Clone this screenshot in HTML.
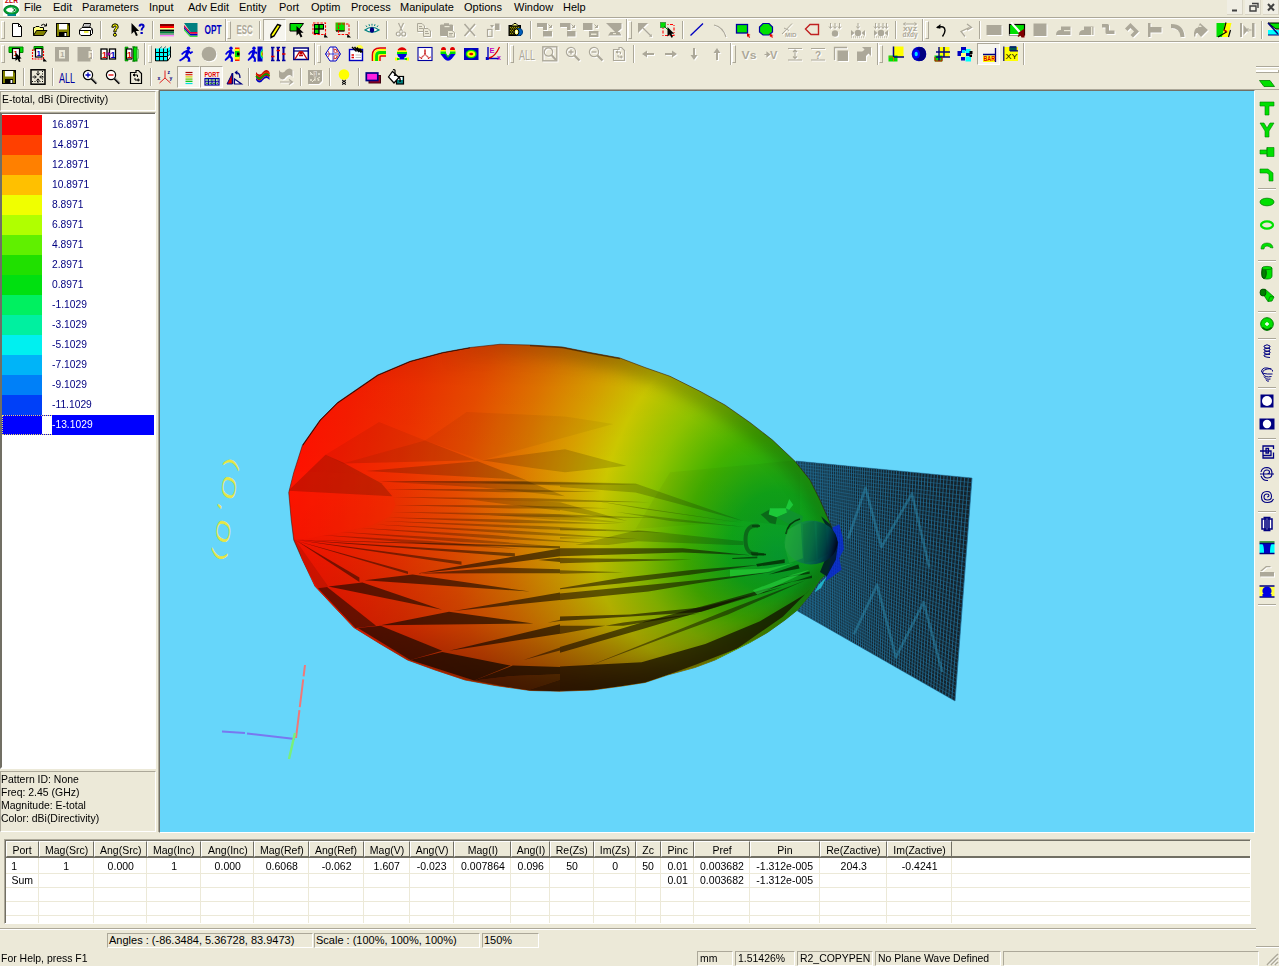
<!DOCTYPE html>
<html><head><meta charset="utf-8"><title>E-total, dBi (Directivity)</title>
<style>
html,body{margin:0;padding:0}
body{width:1279px;height:966px;background:#ECE9D8;position:relative;overflow:hidden;font:11px "Liberation Sans",sans-serif;color:#000;-webkit-font-smoothing:none}
div,svg,span{position:absolute;box-sizing:border-box}
.m{top:0px;height:14px;line-height:14px;white-space:nowrap;font-size:11px}
.i{width:16px;height:16px;overflow:visible}
.hs{height:1px;left:0;width:1279px}
.vs{width:1px;height:18px;background:#ACA899;border-right:1px solid #fff;box-sizing:content-box}
.grip{width:4px;height:18px;border-left:1px solid #fff;border-top:1px solid #fff;border-right:1px solid #ACA899;border-bottom:1px solid #ACA899}
.pr{width:23px;height:22px;border:1px solid #fff;border-top-color:#ACA899;border-left-color:#ACA899;background:#F6F5EE}
.sunk{border:1px solid #fff;border-top-color:#ACA899;border-left-color:#ACA899}
.lg{left:2px;width:40px;height:20px}
.lt{left:52px;width:100px;height:20px;line-height:19px;color:#000080;white-space:nowrap;transform:scaleX(0.935);transform-origin:0 0}
.t{white-space:nowrap;transform:scaleX(0.95);transform-origin:0 0}
.th{top:841px;height:16px;line-height:16px;text-align:center;white-space:nowrap;border-right:1px solid #716F64;border-left:1px solid #fff;border-top:1px solid #fff;border-bottom:1px solid #716F64}
.td{height:14px;line-height:14px;text-align:center;white-space:nowrap}
.c{position:static;display:inline-block;transform:scaleX(0.955)}
.sp{height:15px;top:951px;line-height:12px;white-space:nowrap;padding-left:2px;border:1px solid #fff;border-top-color:#ACA899;border-left-color:#ACA899}
</style></head><body>

<svg style="left:3px;top:0" width="17" height="16" viewBox="0 0 17 16"><rect x="0" y="0" width="16.5" height="16" fill="#fff"/><text x="2" y="3.2" font-size="7.5" font-weight="bold" fill="#C00000" font-family="Liberation Sans, sans-serif" textLength="13" lengthAdjust="spacingAndGlyphs">ZLR</text><path d="M7.5 4.5 L9 7 L5.5 7 Z" fill="#008020"/><ellipse cx="8.2" cy="10" rx="6.3" ry="3.6" fill="none" stroke="#00A030" stroke-width="2.4"/><ellipse cx="8.2" cy="10" rx="7.4" ry="4.6" fill="none" stroke="#006018" stroke-width="0.7"/><path d="M9.5 8.2 L12.5 10 L9.5 11.6" fill="none" stroke="#007020" stroke-width="1"/><rect x="4.5" y="14" width="8.5" height="2" fill="#008888"/></svg>
<span class="m" style="left:24px">File</span>
<span class="m" style="left:53px">Edit</span>
<span class="m" style="left:82px">Parameters</span>
<span class="m" style="left:149px">Input</span>
<span class="m" style="left:188px">Adv Edit</span>
<span class="m" style="left:239px">Entity</span>
<span class="m" style="left:279px">Port</span>
<span class="m" style="left:311px">Optim</span>
<span class="m" style="left:351px">Process</span>
<span class="m" style="left:400px">Manipulate</span>
<span class="m" style="left:464px">Options</span>
<span class="m" style="left:514px">Window</span>
<span class="m" style="left:563px">Help</span>
<div style="left:1227px;top:0;width:16px;height:15px;background:#F0EEE4;border-right:1px solid #D8D4C4;border-bottom:1px solid #D8D4C4"></div>
<div style="left:1245px;top:0;width:16px;height:15px;background:#F0EEE4;border-right:1px solid #D8D4C4;border-bottom:1px solid #D8D4C4"></div>
<div style="left:1263px;top:0;width:16px;height:15px;background:#F0EEE4;border-right:1px solid #D8D4C4;border-bottom:1px solid #D8D4C4"></div>
<svg style="left:1227px;top:0" width="52" height="16" viewBox="0 0 52 16"><path d="M5 10.5 H10" stroke="#404040" stroke-width="2"/><path d="M25 3.5 H31 V8 M23 6 H29 V11 H23 Z" fill="none" stroke="#404040" stroke-width="1.4"/><path d="M41 4 L47 10.5 M47 4 L41 10.5" stroke="#404040" stroke-width="2"/></svg>
<div class="hs" style="top:17px;background:#ACA899;left:0px;width:1279px"></div>
<div class="hs" style="top:18px;background:#FFFFFF;left:0px;width:1279px"></div>
<div class="hs" style="top:41px;background:#ACA899;left:0px;width:1279px"></div>
<div class="hs" style="top:42px;background:#FFFFFF;left:0px;width:1279px"></div>
<div class="hs" style="top:89px;background:#ACA899;left:0px;width:1279px"></div>
<div class="grip" style="left:1px;top:21px"></div>
<svg class="i" style="left:9px;top:22px" viewBox="0 0 16 16"><path d="M3.5 1.5 H9.5 L12.5 4.5 V14.5 H3.5 Z" fill="#fff" stroke="#000" stroke-width="1" /><path d="M9.5 1.5 V4.5 H12.5" fill="none" stroke="#000" stroke-width="1" /></svg>
<svg class="i" style="left:32px;top:22px" viewBox="0 0 16 16"><path d="M1.5 13.5 V5.5 H3 L4 4.5 H7 L8 5.5 H11.5 V8" fill="#FFFF80" stroke="#000" stroke-width="1" /><path d="M1.5 13.5 L4.5 8.5 H15 L11.5 13.5 Z" fill="#808000" stroke="#000" stroke-width="1" /><path d="M9 3.5 Q11.5 1 14 3.5 M14.5 1.5 V4 H12" fill="none" stroke="#000" stroke-width="1" /></svg>
<svg class="i" style="left:55px;top:22px" viewBox="0 0 16 16"><rect x="1.5" y="1.5" width="13" height="13" fill="#808000" stroke="#000"/><rect x="4" y="2" width="8" height="5.5" fill="#fff" /><rect x="4" y="10" width="8" height="4.5" fill="#000" /><rect x="9.5" y="11" width="1.8" height="3" fill="#fff" /><rect x="13" y="2.2" width="1" height="1.3" fill="#000" /></svg>
<svg class="i" style="left:78px;top:22px" viewBox="0 0 16 16"><path d="M4.5 6 L6 1.5 H12.5 L11.5 6" fill="#fff" stroke="#000" stroke-width="1" /><path d="M1.5 8 L4 5.5 H13 L14.5 7.5 V11.5 L12.5 13.5 H3 L1.5 12 Z" fill="#fff" stroke="#000" stroke-width="1" /><path d="M1.5 8.5 H12.5 L14.5 7" fill="none" stroke="#000" stroke-width="1" /><line x1="12.5" y1="8.5" x2="12.5" y2="13.5" stroke="#000" stroke-width="1" /><rect x="6" y="9.3" width="4.5" height="1.4" fill="#E8E800" /><line x1="6.5" y1="3" x2="11" y2="3" stroke="#808080" stroke-width="1" /><line x1="6" y1="4.5" x2="11" y2="4.5" stroke="#808080" stroke-width="1" /><path d="M3 13.5 H12" fill="none" stroke="#000" stroke-width="1" /></svg>
<div class="vs" style="left:100px;top:21px"></div>
<svg class="i" style="left:107px;top:22px" viewBox="0 0 16 16"><path d="M4.8 5.2 Q4.8 1.8 8 1.8 Q11.2 1.8 11.2 4.8 Q11.2 6.5 9.6 7.6 Q9 8.2 9 10 H6.8 Q6.8 7.6 8.2 6.4 Q9 5.6 9 4.9 Q9 3.8 8 3.8 Q7 3.8 7 5.2 Z" fill="#FFFF00" stroke="#000" stroke-width="1" /><circle cx="7.9" cy="12.8" r="1.5" fill="#FFFF00" stroke="#000" stroke-width="1"/></svg>
<svg class="i" style="left:130px;top:22px" viewBox="0 0 16 16"><path d="M1.5 1 V12 L4 9.6 L6 14 L7.8 13.2 L5.8 9 H9.2 Z" fill="#000" stroke="none" stroke-width="1" /><path d="M8.6 4.6 Q8.6 1.6 11.6 1.6 Q14.6 1.6 14.6 4.2 Q14.6 5.6 13.2 6.6 Q12.6 7.1 12.6 8.6 H10.6 Q10.6 6.6 11.8 5.6 Q12.5 5 12.5 4.3 Q12.5 3.5 11.6 3.5 Q10.7 3.5 10.7 4.6 Z" fill="#0000C0" stroke="none" stroke-width="1" /><rect x="10.5" y="10" width="2.3" height="2" fill="#0000C0" /></svg>
<div class="vs" style="left:152px;top:21px"></div>
<svg class="i" style="left:159px;top:22px" viewBox="0 0 16 16"><rect x="1" y="2" width="14" height="2" fill="#800000" /><rect x="1" y="4" width="14" height="2" fill="#FF0000" /><rect x="1" y="6" width="14" height="1.6" fill="#FFFF80" /><rect x="1" y="7.6" width="14" height="2" fill="#000" /><rect x="1" y="9.6" width="14" height="2" fill="#008040" /><rect x="1" y="11.6" width="14" height="1.4" fill="#80A090" /><rect x="1" y="13" width="14" height="1.4" fill="#FF80FF" /></svg>
<svg class="i" style="left:182px;top:22px" viewBox="0 0 16 16"><path d="M2 6.5 L8.5 13.5 H15.5 V15 H8 L2 8.5 Z" fill="#40E040" stroke="none" stroke-width="1" /><path d="M2 4.8 L8.5 11.8 H15.5 V13.5 H8.5 L2 6.5 Z" fill="#0000C0" stroke="none" stroke-width="1" /><path d="M2 3 L8.5 10 H15.5 V11.8 H8.5 L2 4.8 Z" fill="#E00040" stroke="none" stroke-width="1" /><path d="M2 1 H15.5 V10 H8.5 Z" fill="#008080" stroke="none" stroke-width="1" /></svg>
<svg class="i" style="left:205px;top:22px" viewBox="0 0 16 16"><text x="-0.5" y="12.5" fill="#0000C0" font-size="10.5" font-weight="bold" font-family="Liberation Sans, sans-serif" textLength="17" lengthAdjust="spacingAndGlyphs" transform="translate(0,-2) scale(1,1.15)">OPT</text></svg>
<div style="left:225px;top:19px;width:2px;height:22px;background:#fff;border-left:1px solid #ACA899"></div>
<div class="grip" style="left:227px;top:21px"></div>
<svg class="i" style="left:237px;top:22px" viewBox="0 0 16 16"><text x="0.5" y="13.5" fill="#fff" font-size="10.5" font-weight="bold" font-family="Liberation Sans, sans-serif" textLength="16" lengthAdjust="spacingAndGlyphs" transform="translate(0,-2) scale(1,1.15)">ESC</text><text x="-0.5" y="12.5" fill="#ACA899" font-size="10.5" font-weight="bold" font-family="Liberation Sans, sans-serif" textLength="16" lengthAdjust="spacingAndGlyphs" transform="translate(0,-2) scale(1,1.15)">ESC</text></svg>
<div class="vs" style="left:259px;top:21px"></div>
<div class="pr" style="left:263px;top:19px"></div>
<svg class="i" style="left:267px;top:23px" viewBox="0 0 16 16"><path d="M10.5 1.5 L13.5 2.5 L7 13 L4 14.5 L4 11.5 Z" fill="#FFFF00" stroke="#000" stroke-width="1.4" /><path d="M4 14.5 L4 12.4 L5.8 13.6 Z" fill="#000" stroke="none" stroke-width="1" /></svg>
<svg class="i" style="left:289px;top:22px" viewBox="0 0 16 16"><path d="M1 1.5 H14.5 L9 9 H1 Z" fill="#00E000" stroke="#000" stroke-width="1" /><path d="M7.5 4 V13.5 L9.8 11.4 L11.6 15.4 L13.4 14.6 L11.6 10.8 H14.6 Z" fill="#000" stroke="none" stroke-width="1" /></svg>
<svg class="i" style="left:312px;top:22px" viewBox="0 0 16 16"><rect x="2.5" y="2.5" width="9" height="9" fill="#00E000" stroke="#000"/><rect x="7" y="7" width="5" height="5" fill="#ECE9D8" /><line x1="7" y1="2" x2="7" y2="12" stroke="#000" stroke-width="1.4" /><line x1="2" y1="7" x2="12" y2="7" stroke="#000" stroke-width="1.4" /><rect x="1" y="1" width="12.5" height="11.5" fill="none" stroke="#FF0000" stroke-dasharray="2.5 1.2" stroke-width="1.1"/><path d="M12 15.5 H16 L12.5 12 Z" fill="#000" stroke="none" stroke-width="1" /></svg>
<svg class="i" style="left:335px;top:22px" viewBox="0 0 16 16"><rect x="1" y="1" width="8.5" height="7.5" fill="#00E000" stroke="#60A000"/><path d="M1 9 H9.5" fill="none" stroke="#000" stroke-width="1.3" /><rect x="3.5" y="2" width="10.5" height="10.5" fill="none" stroke="#FF0000" stroke-dasharray="2.5 1.2" stroke-width="1.1"/><path d="M12 15.5 H16 L12.5 12 Z" fill="#000" stroke="none" stroke-width="1" /></svg>
<div class="vs" style="left:357px;top:21px"></div>
<svg class="i" style="left:364px;top:22px" viewBox="0 0 16 16"><path d="M1 8 Q8 2.5 15 8 Q8 12.5 1 8 Z" fill="#fff" stroke="#008080" stroke-width="1.2" /><ellipse cx="8" cy="8" rx="2.2" ry="2.8" fill="#000080" stroke="none" stroke-width="1"/><path d="M3 5 L2 3.5 M5.5 4 L5 2.2 M8 3.6 V1.8 M10.5 4 L11 2.2 M13 5 L14 3.5" fill="none" stroke="#008080" stroke-width="1" /></svg>
<div class="vs" style="left:386px;top:21px"></div>
<svg class="i" style="left:393px;top:22px" viewBox="0 0 16 16"><g transform="translate(1,1)"><path d="M5.5 1 L9.5 9.5 M10.5 1 L6.5 9.5" fill="none" stroke="#FFFFFF" stroke-width="1.2" /><circle cx="5.3" cy="12" r="2" fill="none" stroke="#FFFFFF" stroke-width="1.2"/><circle cx="10.7" cy="12" r="2" fill="none" stroke="#FFFFFF" stroke-width="1.2"/></g><path d="M5.5 1 L9.5 9.5 M10.5 1 L6.5 9.5" fill="none" stroke="#ACA899" stroke-width="1.2" /><circle cx="5.3" cy="12" r="2" fill="none" stroke="#ACA899" stroke-width="1.2"/><circle cx="10.7" cy="12" r="2" fill="none" stroke="#ACA899" stroke-width="1.2"/></svg>
<svg class="i" style="left:416px;top:22px" viewBox="0 0 16 16"><g transform="translate(1,1)"><path d="M1.5 1.5 H6 L8.5 4 V9.5 H1.5 Z" fill="#ECE9D8" stroke="#FFFFFF" stroke-width="1" /><path d="M3 4.5 H6 M3 6.5 H7" fill="none" stroke="#FFFFFF" stroke-width="1" /><path d="M7.5 6.5 H12 L14.5 9 V14.5 H7.5 Z" fill="#ECE9D8" stroke="#FFFFFF" stroke-width="1" /><path d="M9 9.5 H12 M9 11.5 H13" fill="none" stroke="#FFFFFF" stroke-width="1" /></g><path d="M1.5 1.5 H6 L8.5 4 V9.5 H1.5 Z" fill="#ECE9D8" stroke="#ACA899" stroke-width="1" /><path d="M3 4.5 H6 M3 6.5 H7" fill="none" stroke="#ACA899" stroke-width="1" /><path d="M7.5 6.5 H12 L14.5 9 V14.5 H7.5 Z" fill="#ECE9D8" stroke="#ACA899" stroke-width="1" /><path d="M9 9.5 H12 M9 11.5 H13" fill="none" stroke="#ACA899" stroke-width="1" /></svg>
<svg class="i" style="left:439px;top:22px" viewBox="0 0 16 16"><g transform="translate(1,1)"><path d="M1.5 3 H13.5 V13.5 H1.5 Z" fill="#FFFFFF" stroke="#FFFFFF" stroke-width="1" /><rect x="5" y="1.2" width="5" height="3" fill="#FFFFFF" /><path d="M8.5 8.5 H13 L15.5 10.5 V15 H8.5 Z" fill="#ECE9D8" stroke="#FFFFFF" stroke-width="1" /><path d="M10 11.5 H14" fill="none" stroke="#ECE9D8" stroke-width="1" /></g><path d="M1.5 3 H13.5 V13.5 H1.5 Z" fill="#ACA899" stroke="#ACA899" stroke-width="1" /><rect x="5" y="1.2" width="5" height="3" fill="#ACA899" /><path d="M8.5 8.5 H13 L15.5 10.5 V15 H8.5 Z" fill="#ECE9D8" stroke="#ACA899" stroke-width="1" /><path d="M10 11.5 H14" fill="none" stroke="#ACA899" stroke-width="1" /><rect x="5.5" y="4" width="5" height="1.2" fill="#ECE9D8" /><path d="M10 11.5 H14 M10 13 H13" fill="none" stroke="#ACA899" stroke-width="1" /></svg>
<svg class="i" style="left:462px;top:22px" viewBox="0 0 16 16"><g transform="translate(1,1)"><path d="M2.5 2 L13 14 M13 2 L2.5 14" fill="none" stroke="#FFFFFF" stroke-width="1.6" /></g><path d="M2.5 2 L13 14 M13 2 L2.5 14" fill="none" stroke="#ACA899" stroke-width="1.6" /></svg>
<svg class="i" style="left:485px;top:22px" viewBox="0 0 16 16"><g transform="translate(1,1)"><rect x="2.5" y="7.5" width="4.5" height="7" fill="none" stroke="#FFFFFF" stroke-width="1.2"/><rect x="10" y="1.5" width="4.5" height="6.5" fill="#FFFFFF" /><path d="M5 3 H9 L7 6 Z" fill="#FFFFFF" stroke="none" stroke-width="1" /></g><rect x="2.5" y="7.5" width="4.5" height="7" fill="none" stroke="#ACA899" stroke-width="1.2"/><rect x="10" y="1.5" width="4.5" height="6.5" fill="#ACA899" /><path d="M5 3 H9 L7 6 Z" fill="#ACA899" stroke="none" stroke-width="1" /></svg>
<svg class="i" style="left:508px;top:22px" viewBox="0 0 16 16"><rect x="1" y="3.5" width="11.5" height="10" fill="#202000" stroke="#000"/><path d="M4 3.5 L6 1.5 H8 L10 3.5" fill="#FFFF80" stroke="#000" stroke-width="1" /><g fill="#C8C000"><rect x="2" y="5.0" width="1" height="0.8" fill="#C8C000" /><rect x="3" y="6.5" width="1" height="0.8" fill="#C8C000" /><rect x="2" y="8.0" width="1" height="0.8" fill="#C8C000" /><rect x="3" y="9.5" width="1" height="0.8" fill="#C8C000" /><rect x="2" y="11.0" width="1" height="0.8" fill="#C8C000" /><rect x="4" y="5.0" width="1" height="0.8" fill="#C8C000" /><rect x="5" y="6.5" width="1" height="0.8" fill="#C8C000" /><rect x="4" y="8.0" width="1" height="0.8" fill="#C8C000" /><rect x="5" y="9.5" width="1" height="0.8" fill="#C8C000" /><rect x="4" y="11.0" width="1" height="0.8" fill="#C8C000" /><rect x="6" y="5.0" width="1" height="0.8" fill="#C8C000" /><rect x="7" y="6.5" width="1" height="0.8" fill="#C8C000" /><rect x="6" y="8.0" width="1" height="0.8" fill="#C8C000" /><rect x="7" y="9.5" width="1" height="0.8" fill="#C8C000" /><rect x="6" y="11.0" width="1" height="0.8" fill="#C8C000" /><rect x="8" y="5.0" width="1" height="0.8" fill="#C8C000" /><rect x="9" y="6.5" width="1" height="0.8" fill="#C8C000" /><rect x="8" y="8.0" width="1" height="0.8" fill="#C8C000" /><rect x="9" y="9.5" width="1" height="0.8" fill="#C8C000" /><rect x="8" y="11.0" width="1" height="0.8" fill="#C8C000" /><rect x="10" y="5.0" width="1" height="0.8" fill="#C8C000" /><rect x="11" y="6.5" width="1" height="0.8" fill="#C8C000" /><rect x="10" y="8.0" width="1" height="0.8" fill="#C8C000" /><rect x="11" y="9.5" width="1" height="0.8" fill="#C8C000" /><rect x="10" y="11.0" width="1" height="0.8" fill="#C8C000" /></g><circle cx="11" cy="10" r="3.6" fill="#0060C0" stroke="#004080" stroke-width="1"/><ellipse cx="8.5" cy="10" rx="2.4" ry="3" fill="#FFFF60" stroke="#000" stroke-width="1"/><ellipse cx="8.5" cy="10" rx="1" ry="1.5" fill="#fff" stroke="none" stroke-width="1"/></svg>
<div class="vs" style="left:530px;top:21px"></div>
<svg class="i" style="left:537px;top:22px" viewBox="0 0 16 16"><g transform="translate(1,1)"><path d="M0 1 H10 V8 H6 V5 H0 Z" fill="#FFFFFF" stroke="none" stroke-width="1" /><path d="M6 9 H15 V14.5 H6 Z" fill="#FFFFFF" stroke="none" stroke-width="1" /><path d="M11.5 2.5 L14.5 5.5 M14.5 3 V5.5 H12" fill="none" stroke="#FFFFFF" stroke-width="1" /></g><path d="M0 1 H10 V8 H6 V5 H0 Z" fill="#ACA899" stroke="none" stroke-width="1" /><path d="M6 9 H15 V14.5 H6 Z" fill="#ACA899" stroke="none" stroke-width="1" /><path d="M11.5 2.5 L14.5 5.5 M14.5 3 V5.5 H12" fill="none" stroke="#ACA899" stroke-width="1" /></svg>
<svg class="i" style="left:560px;top:22px" viewBox="0 0 16 16"><g transform="translate(1,1)"><path d="M0 1 H10.5 V8 H7 V5 H0 Z" fill="#FFFFFF" stroke="none" stroke-width="1" /><path d="M7 9 H15.5 V14.5 H7 Z" fill="#FFFFFF" stroke="none" stroke-width="1" /><path d="M11.5 2.5 L14.5 5.5 M14.5 3 V5.5 H12" fill="none" stroke="#FFFFFF" stroke-width="1" /></g><path d="M0 1 H10.5 V8 H7 V5 H0 Z" fill="#ACA899" stroke="none" stroke-width="1" /><path d="M7 9 H15.5 V14.5 H7 Z" fill="#ACA899" stroke="none" stroke-width="1" /><path d="M11.5 2.5 L14.5 5.5 M14.5 3 V5.5 H12" fill="none" stroke="#ACA899" stroke-width="1" /></svg>
<svg class="i" style="left:583px;top:22px" viewBox="0 0 16 16"><g transform="translate(1,1)"><path d="M0 1 H9.5 V8 H0 Z" fill="#FFFFFF" stroke="none" stroke-width="1" /><path d="M6 9 H15.5 V15 H6 Z" fill="#FFFFFF" stroke="none" stroke-width="1" /><path d="M11.5 2.5 L14.5 5.5 M14.5 3 V5.5 H12" fill="none" stroke="#FFFFFF" stroke-width="1" /></g><path d="M0 1 H9.5 V8 H0 Z" fill="#ACA899" stroke="none" stroke-width="1" /><path d="M6 9 H15.5 V15 H6 Z" fill="#ACA899" stroke="none" stroke-width="1" /><path d="M11.5 2.5 L14.5 5.5 M14.5 3 V5.5 H12" fill="none" stroke="#ACA899" stroke-width="1" /><rect x="8" y="11.5" width="5.5" height="1.5" fill="#ECE9D8" /></svg>
<svg class="i" style="left:606px;top:22px" viewBox="0 0 16 16"><g transform="translate(1,1)"><path d="M0 1 H15.5 V6.5 L11.5 10 H13.5 L15.5 13.5 H2 L4.5 10 H9 Z" fill="#FFFFFF" stroke="none" stroke-width="1" /></g><path d="M0 1 H15.5 V6.5 L11.5 10 H13.5 L15.5 13.5 H2 L4.5 10 H9 Z" fill="#ACA899" stroke="none" stroke-width="1" /><rect x="7" y="11" width="3" height="1.2" fill="#ECE9D8" /></svg>
<div style="left:626px;top:19px;width:2px;height:22px;background:#fff;border-left:1px solid #ACA899"></div>
<div class="grip" style="left:628px;top:21px"></div>
<svg class="i" style="left:637px;top:22px" viewBox="0 0 16 16"><g transform="translate(1,1)"><path d="M1 1 H11 L1 11 Z" fill="#FFFFFF" stroke="none" stroke-width="1" /><path d="M6 6 L13.5 13.5" fill="none" stroke="#FFFFFF" stroke-width="1.4" /><path d="M12 14.5 L14.5 12 L15 15 Z" fill="#FFFFFF" stroke="none" stroke-width="1" /></g><path d="M1 1 H11 L1 11 Z" fill="#ACA899" stroke="none" stroke-width="1" /><path d="M6 6 L13.5 13.5" fill="none" stroke="#ACA899" stroke-width="1.4" /><path d="M12 14.5 L14.5 12 L15 15 Z" fill="#ACA899" stroke="none" stroke-width="1" /></svg>
<svg class="i" style="left:660px;top:22px" viewBox="0 0 16 16"><rect x="3" y="2.5" width="11" height="11" fill="none" stroke="#FF0000" stroke-dasharray="3 1.5 1 1.5" stroke-width="1.1"/><rect x="0.5" y="0.5" width="5" height="5" fill="#00E000" stroke="#40A040"/><path d="M7.5 5 V14.5 L9.8 12.4 L11.4 15.8 L13 15 L11.4 11.8 H14.2 Z" fill="#000" stroke="none" stroke-width="1" /><line x1="4" y1="4" x2="8" y2="8" stroke="#008000" stroke-width="1" /></svg>
<div class="vs" style="left:682px;top:21px"></div>
<svg class="i" style="left:689px;top:22px" viewBox="0 0 16 16"><line x1="1.5" y1="13.5" x2="14" y2="1.5" stroke="#0000C0" stroke-width="1.3" /></svg>
<svg class="i" style="left:712px;top:22px" viewBox="0 0 16 16"><path d="M2 3 Q11 5 14 15" fill="none" stroke="#fff" stroke-width="1.2" transform="translate(1,1)"/><path d="M2 3 Q11 5 14 15" fill="none" stroke="#ACA899" stroke-width="1.2" /></svg>
<svg class="i" style="left:735px;top:22px" viewBox="0 0 16 16"><rect x="1.5" y="2.5" width="11" height="8.5" fill="#00E000" stroke="#0000A0" stroke-width="1.3"/><path d="M12 11 L15.5 13 L14 13.4 L15.2 15.4 L14 15.8 L13 14 L12 15.2 Z" fill="#E00000" stroke="none" stroke-width="1" /></svg>
<svg class="i" style="left:758px;top:22px" viewBox="0 0 16 16"><path d="M5 1.5 H11 L14.5 5 V10 L11 13 H5 L1.5 10 V5 Z" fill="#00E000" stroke="#0000A0" stroke-width="1.2" /><path d="M11.5 11.5 L15.5 13.2 L14 13.6 L15 15.4 L13.8 15.8 L13 14.2 L12 15.2 Z" fill="#E00000" stroke="none" stroke-width="1" /></svg>
<svg class="i" style="left:781px;top:22px" viewBox="0 0 16 16"><g transform="translate(1,1)"><path d="M1 12 L11 1.5 M3 6 L8 8.5" fill="none" stroke="#FFFFFF" stroke-width="1" /><text x="4" y="15" fill="#FFFFFF" font-size="6" font-weight="bold" font-family="Liberation Sans, sans-serif" textLength="11.5" lengthAdjust="spacingAndGlyphs">MID</text></g><path d="M1 12 L11 1.5 M3 6 L8 8.5" fill="none" stroke="#ACA899" stroke-width="1" /><text x="4" y="15" fill="#ACA899" font-size="6" font-weight="bold" font-family="Liberation Sans, sans-serif" textLength="11.5" lengthAdjust="spacingAndGlyphs">MID</text></svg>
<svg class="i" style="left:804px;top:22px" viewBox="0 0 16 16"><path d="M6 2.5 H14.5 V12.5 H7 L1.5 7 Z" fill="none" stroke="#C02020" stroke-width="1.4" /></svg>
<svg class="i" style="left:827px;top:22px" viewBox="0 0 16 16"><g transform="translate(1,1)"><circle cx="8" cy="11.5" r="3.2" fill="#FFFFFF" stroke="none" stroke-width="1"/><path d="M3.5 1 V6 M8 1 V6 M12.5 1 V6 M2 4.5 L3.5 6.5 L5 4.5 M6.5 4.5 L8 6.5 L9.5 4.5 M11 4.5 L12.5 6.5 L14 4.5" fill="none" stroke="#FFFFFF" stroke-width="1" /></g><circle cx="8" cy="11.5" r="3.2" fill="#ACA899" stroke="none" stroke-width="1"/><path d="M3.5 1 V6 M8 1 V6 M12.5 1 V6 M2 4.5 L3.5 6.5 L5 4.5 M6.5 4.5 L8 6.5 L9.5 4.5 M11 4.5 L12.5 6.5 L14 4.5" fill="none" stroke="#ACA899" stroke-width="1" /></svg>
<svg class="i" style="left:850px;top:22px" viewBox="0 0 16 16"><g transform="translate(1,1)"><circle cx="8" cy="11" r="3.2" fill="#FFFFFF" stroke="none" stroke-width="1"/><path d="M1 8 L4.5 11 L1 14 Z M15 8 L11.5 11 L15 14 Z" fill="#FFFFFF" stroke="none" stroke-width="1" /><path d="M8 1 V6 M6.5 4.5 L8 6.5 L9.5 4.5" fill="none" stroke="#FFFFFF" stroke-width="1" /><path d="M1 15 H15" fill="none" stroke="#FFFFFF" stroke-width="1" stroke-dasharray="1 1"/></g><circle cx="8" cy="11" r="3.2" fill="#ACA899" stroke="none" stroke-width="1"/><path d="M1 8 L4.5 11 L1 14 Z M15 8 L11.5 11 L15 14 Z" fill="#ACA899" stroke="none" stroke-width="1" /><path d="M8 1 V6 M6.5 4.5 L8 6.5 L9.5 4.5" fill="none" stroke="#ACA899" stroke-width="1" /><path d="M1 15 H15" fill="none" stroke="#ACA899" stroke-width="1" stroke-dasharray="1 1"/></svg>
<svg class="i" style="left:873px;top:22px" viewBox="0 0 16 16"><g transform="translate(1,1)"><circle cx="8" cy="11" r="3.2" fill="#FFFFFF" stroke="none" stroke-width="1"/><path d="M1 8 L4.5 11 L1 14 Z M15 8 L11.5 11 L15 14 Z" fill="#FFFFFF" stroke="none" stroke-width="1" /><path d="M2.5 1 V6 M6 1 V6 M10 1 V6 M13.5 1 V6 M1 4.5 L2.5 6.5 L4 4.5 M4.5 4.5 L6 6.5 L7.5 4.5 M8.5 4.5 L10 6.5 L11.5 4.5 M12 4.5 L13.5 6.5 L15 4.5" fill="none" stroke="#FFFFFF" stroke-width="1" /><path d="M1 15 H15" fill="none" stroke="#FFFFFF" stroke-width="1" stroke-dasharray="1 1"/></g><circle cx="8" cy="11" r="3.2" fill="#ACA899" stroke="none" stroke-width="1"/><path d="M1 8 L4.5 11 L1 14 Z M15 8 L11.5 11 L15 14 Z" fill="#ACA899" stroke="none" stroke-width="1" /><path d="M2.5 1 V6 M6 1 V6 M10 1 V6 M13.5 1 V6 M1 4.5 L2.5 6.5 L4 4.5 M4.5 4.5 L6 6.5 L7.5 4.5 M8.5 4.5 L10 6.5 L11.5 4.5 M12 4.5 L13.5 6.5 L15 4.5" fill="none" stroke="#ACA899" stroke-width="1" /><path d="M1 15 H15" fill="none" stroke="#ACA899" stroke-width="1" stroke-dasharray="1 1"/></svg>
<div class="vs" style="left:895px;top:21px"></div>
<svg class="i" style="left:902px;top:22px" viewBox="0 0 16 16"><g transform="translate(1,1)"><text x="1" y="8.5" fill="#FFFFFF" font-size="7.5" font-weight="bold" font-family="Liberation Sans, sans-serif" textLength="14" lengthAdjust="spacingAndGlyphs">xyz</text><text x="0.5" y="15" fill="#FFFFFF" font-size="7.5" font-weight="bold" font-family="Liberation Sans, sans-serif" textLength="15" lengthAdjust="spacingAndGlyphs">dxdy</text><path d="M1.5 2 H14.5 M3.5 0.5 L1.5 2 L3.5 3.5 M12.5 0.5 L14.5 2 L12.5 3.5" fill="none" stroke="#FFFFFF" stroke-width="1" /></g><text x="1" y="8.5" fill="#ACA899" font-size="7.5" font-weight="bold" font-family="Liberation Sans, sans-serif" textLength="14" lengthAdjust="spacingAndGlyphs">xyz</text><text x="0.5" y="15" fill="#ACA899" font-size="7.5" font-weight="bold" font-family="Liberation Sans, sans-serif" textLength="15" lengthAdjust="spacingAndGlyphs">dxdy</text><path d="M1.5 2 H14.5 M3.5 0.5 L1.5 2 L3.5 3.5 M12.5 0.5 L14.5 2 L12.5 3.5" fill="none" stroke="#ACA899" stroke-width="1" /></svg>
<div style="left:922px;top:19px;width:2px;height:22px;background:#fff;border-left:1px solid #ACA899"></div>
<div class="grip" style="left:925px;top:21px"></div>
<svg class="i" style="left:934px;top:22px" viewBox="0 0 16 16"><path d="M3 5.5 Q11 3 11 8.5 Q11 11 8.5 14.5" fill="none" stroke="#000" stroke-width="1.4" /><path d="M2 5.8 L6.5 2 L6.3 6.8 Z" fill="#000" stroke="none" stroke-width="1" /></svg>
<svg class="i" style="left:957px;top:22px" viewBox="0 0 16 16"><g transform="translate(1,1)"><path d="M12.5 5.5 L4 9.5 L8 14.5" fill="none" stroke="#FFFFFF" stroke-width="1.3" /><path d="M10 2 L14.5 5.5 L10 8" fill="none" stroke="#FFFFFF" stroke-width="1.3" /></g><path d="M12.5 5.5 L4 9.5 L8 14.5" fill="none" stroke="#ACA899" stroke-width="1.3" /><path d="M10 2 L14.5 5.5 L10 8" fill="none" stroke="#ACA899" stroke-width="1.3" /></svg>
<div class="vs" style="left:979px;top:21px"></div>
<svg class="i" style="left:986px;top:22px" viewBox="0 0 16 16"><g transform="translate(1,1)"><path d="M0.5 3 H15.5 V13 H0.5 Z" fill="#FFFFFF" stroke="none" stroke-width="1" /></g><path d="M0.5 3 H15.5 V13 H0.5 Z" fill="#ACA899" stroke="none" stroke-width="1" /></svg>
<svg class="i" style="left:1009px;top:22px" viewBox="0 0 16 16"><rect x="0.5" y="2.5" width="15" height="10.5" fill="#00E000" stroke="#000" stroke-width="1.2"/><rect x="0.5" y="12" width="9" height="1.4" fill="#fff" /><path d="M2 0.5 L12 11.5" fill="none" stroke="#fff" stroke-width="2.2" /><path d="M9 11 L15.5 6.5 V15.5 H12.5 L11.5 13.5 L9.5 15 L8.5 14 L10.5 12.5 Z" fill="#800000" stroke="none" stroke-width="1" /></svg>
<svg class="i" style="left:1032px;top:22px" viewBox="0 0 16 16"><g transform="translate(1,1)"><path d="M1.5 1.5 H14.5 V14 H1.5 Z" fill="#FFFFFF" stroke="none" stroke-width="1" /></g><path d="M1.5 1.5 H14.5 V14 H1.5 Z" fill="#ACA899" stroke="none" stroke-width="1" /></svg>
<svg class="i" style="left:1055px;top:22px" viewBox="0 0 16 16"><g transform="translate(1,1)"><path d="M1 13 Q1 8 6 8 V4.5 H15.5 V13 Z" fill="#FFFFFF" stroke="none" stroke-width="1" /></g><path d="M1 13 Q1 8 6 8 V4.5 H15.5 V13 Z" fill="#ACA899" stroke="none" stroke-width="1" /><rect x="9" y="8" width="6.5" height="1.2" fill="#ECE9D8" /></svg>
<svg class="i" style="left:1078px;top:22px" viewBox="0 0 16 16"><g transform="translate(1,1)"><path d="M1 13 Q1 8 6 8 V4.5 H15.5 V13 Z" fill="#FFFFFF" stroke="none" stroke-width="1" /></g><path d="M1 13 Q1 8 6 8 V4.5 H15.5 V13 Z" fill="#ACA899" stroke="none" stroke-width="1" /><rect x="13" y="5" width="1.3" height="8" fill="#ECE9D8" /></svg>
<svg class="i" style="left:1101px;top:22px" viewBox="0 0 16 16"><g transform="translate(1,1)"><path d="M1 2 H6.5 Q8 2 8 3.5 V8.5 H13.5 V12 H6 Q4.5 12 4.5 10.5 V5.5 H1 Z" fill="#FFFFFF" stroke="none" stroke-width="1" /></g><path d="M1 2 H6.5 Q8 2 8 3.5 V8.5 H13.5 V12 H6 Q4.5 12 4.5 10.5 V5.5 H1 Z" fill="#ACA899" stroke="none" stroke-width="1" /></svg>
<svg class="i" style="left:1124px;top:22px" viewBox="0 0 16 16"><g transform="translate(1,1)"><path d="M1 6.5 L6.5 1 L15 9.5 L9 15.5 L6.5 13 L10 9.5 L6.5 6 L3.5 9 Z" fill="#FFFFFF" stroke="none" stroke-width="1" /></g><path d="M1 6.5 L6.5 1 L15 9.5 L9 15.5 L6.5 13 L10 9.5 L6.5 6 L3.5 9 Z" fill="#ACA899" stroke="none" stroke-width="1" /></svg>
<svg class="i" style="left:1147px;top:22px" viewBox="0 0 16 16"><g transform="translate(1,1)"><path d="M1 1 H3.5 V5 H14.5 V10.5 H3.5 V15 H1 Z" fill="#FFFFFF" stroke="none" stroke-width="1" /></g><path d="M1 1 H3.5 V5 H14.5 V10.5 H3.5 V15 H1 Z" fill="#ACA899" stroke="none" stroke-width="1" /></svg>
<svg class="i" style="left:1170px;top:22px" viewBox="0 0 16 16"><g transform="translate(1,1)"><path d="M1 2 Q14 2 14.5 15 H10.5 Q10 6 1 6 Z" fill="#FFFFFF" stroke="none" stroke-width="1" /></g><path d="M1 2 Q14 2 14.5 15 H10.5 Q10 6 1 6 Z" fill="#ACA899" stroke="none" stroke-width="1" /></svg>
<svg class="i" style="left:1193px;top:22px" viewBox="0 0 16 16"><g transform="translate(1,1)"><path d="M7 1 L15 8 L8 15 L4.5 11 Q2 11 2.5 14.5 H1 Q0.5 6 5 5.5 Z" fill="#FFFFFF" stroke="none" stroke-width="1" /></g><path d="M7 1 L15 8 L8 15 L4.5 11 Q2 11 2.5 14.5 H1 Q0.5 6 5 5.5 Z" fill="#ACA899" stroke="none" stroke-width="1" /><path d="M7 3 L9 5 L5 5 Z" fill="#ECE9D8" stroke="none" stroke-width="1" /></svg>
<svg class="i" style="left:1216px;top:22px" viewBox="0 0 16 16"><rect x="0.5" y="1" width="8.5" height="14" fill="#00E000" /><path d="M9 1 H15.5 L12 15 H6 Z" fill="#FFFF00" stroke="none" stroke-width="1" /><rect x="13" y="8" width="3" height="7" fill="#ECE9D8" /><path d="M10 0.5 L8 8 L10.5 10 L2 15" fill="none" stroke="#000" stroke-width="1.2" /><path d="M14.5 8 L12.5 15" fill="none" stroke="#000" stroke-width="1.2" /><path d="M8 8 L11 9.5" fill="none" stroke="#E00000" stroke-width="1.2" /></svg>
<svg class="i" style="left:1239px;top:22px" viewBox="0 0 16 16"><g transform="translate(1,1)"><path d="M1 1 H3 V15 H1 Z M13 1 H15.5 V15 H13 Z M4.5 3 L9 8 L4.5 13 Z" fill="#FFFFFF" stroke="none" stroke-width="1" /></g><path d="M1 1 H3 V15 H1 Z M13 1 H15.5 V15 H13 Z M4.5 3 L9 8 L4.5 13 Z" fill="#ACA899" stroke="none" stroke-width="1" /><path d="M7.5 8 H12.5 M9.5 6 L7.5 8 L9.5 10" fill="none" stroke="#ACA899" stroke-width="1" /></svg>
<div class="vs" style="left:1261px;top:21px"></div>
<svg class="i" style="left:1268px;top:22px" viewBox="0 0 16 16"><path d="M0 1 H16 V7 H8 Z" fill="#00E000" stroke="#000" stroke-width="1" /><rect x="0" y="8" width="16" height="5" fill="#00FFFF" /><path d="M0 1 L10 12" fill="none" stroke="#000080" stroke-width="1.5" /><path d="M0 13 H16" fill="none" stroke="#000080" stroke-width="1" /></svg>
<div class="grip" style="left:1px;top:45px"></div>
<svg class="i" style="left:8px;top:46px" viewBox="0 0 16 16"><path d="M1 1 H15 V6.5 H1 Z" fill="#00E000" stroke="#008000" stroke-width="1" /><rect x="4.5" y="2.5" width="7" height="10" fill="#fff" stroke="#000" stroke-width="1.2"/><text x="5.6" y="10" fill="#E00000" font-size="8" font-weight="bold" font-family="Liberation Sans, sans-serif" >1</text><path d="M7.5 6.5 V15 L9.6 13 L11 16 L12.6 15.4 L11.2 12.4 H13.6 Z" fill="#000" stroke="none" stroke-width="1" /></svg>
<svg class="i" style="left:31px;top:46px" viewBox="0 0 16 16"><path d="M3 0.5 H12 V4 H3 Z" fill="#00E000" stroke="#008000" stroke-width="1" /><rect x="1.5" y="4" width="11" height="9" fill="none" stroke="#FF0000" stroke-dasharray="2 1" stroke-width="1.1"/><rect x="4.5" y="2.5" width="6.5" height="8.5" fill="#fff" stroke="#000" stroke-width="1.2"/><text x="5.6" y="9.5" fill="#0000C0" font-size="8" font-weight="bold" font-family="Liberation Sans, sans-serif" >1</text><path d="M12 15.5 H16 L12.5 12 Z" fill="#000" stroke="none" stroke-width="1" /></svg>
<svg class="i" style="left:54px;top:46px" viewBox="0 0 16 16"><rect x="1" y="1" width="14" height="14.5" fill="#ACA899" /><rect x="5" y="4" width="6" height="8.5" fill="#ECE9D8" /><text x="6.2" y="11" fill="#ACA899" font-size="7.5" font-weight="bold" font-family="Liberation Sans, sans-serif" >1</text></svg>
<svg class="i" style="left:77px;top:46px" viewBox="0 0 16 16"><rect x="0.5" y="1" width="13" height="14.5" fill="#ACA899" /><rect x="11" y="4.5" width="5" height="8" fill="#ECE9D8" stroke="#ACA899"/><text x="12.2" y="11.5" fill="#ACA899" font-size="7.5" font-weight="bold" font-family="Liberation Sans, sans-serif" >1</text><rect x="15" y="4" width="1.5" height="9" fill="#fff" /></svg>
<svg class="i" style="left:100px;top:46px" viewBox="0 0 16 16"><rect x="1" y="3" width="6" height="10" fill="#fff" stroke="#000" stroke-width="1.3"/><rect x="9.5" y="3" width="6" height="10" fill="#fff" stroke="#000" stroke-width="1.3"/><text x="2" y="11.5" fill="#E00000" font-size="9" font-weight="bold" font-family="Liberation Sans, sans-serif" >1</text><text x="10.5" y="11.5" fill="#0000C0" font-size="9" font-weight="bold" font-family="Liberation Sans, sans-serif" >1</text><path d="M6 8 H10 M8 6.5 L10 8 L8 9.5" fill="none" stroke="#A000A0" stroke-width="1.2" /></svg>
<svg class="i" style="left:123px;top:46px" viewBox="0 0 16 16"><path d="M2 1 H5 V2.5 H3 V13.5 H5 V15 H2 Z" fill="#00C000" stroke="#008000" stroke-width="0.6" /><rect x="3.5" y="3" width="5.5" height="10" fill="#fff" stroke="#000" stroke-width="1.2"/><text x="4" y="11.5" fill="#E00000" font-size="9" font-weight="bold" font-family="Liberation Sans, sans-serif" >1</text><rect x="10.5" y="1" width="3.5" height="14" fill="#00E000" stroke="#008000"/><rect x="14" y="3.5" width="1.5" height="9" fill="#80FF80" stroke="#60A060" stroke-width="0.6"/><path d="M9 1 H12 M9 15 H12" fill="none" stroke="#008000" stroke-width="1.2" /></svg>
<div style="left:144px;top:43px;width:2px;height:22px;background:#fff;border-left:1px solid #ACA899"></div>
<div class="grip" style="left:148px;top:45px"></div>
<svg class="i" style="left:155px;top:46px" viewBox="0 0 16 16"><path d="M0.5 2.5 H12.5 L15.5 0.5 V11 L12.5 15 H0.5 Z" fill="#00FFFF" stroke="none" stroke-width="1" /><path d="M12.5 11 L15.5 8 V11 L12.5 15 Z" fill="#fff" stroke="none" stroke-width="1" /><path d="M0.5 6.5 H12.5 M0.5 10.5 H12.5 M0.5 14.8 H12.5 M4.5 2.5 V15 M8.5 2.5 V15 M12.5 2.5 V15 M0.5 2.5 V15" fill="none" stroke="#000" stroke-width="1" /><path d="M12.5 15 L15.5 11 V0.5" fill="none" stroke="#000" stroke-width="1" /><path d="M12.5 6.5 L15.5 4 M12.5 10.5 L15.5 8 M4.5 2.5 L7 0.5 M8.5 2.5 L11 0.5" fill="none" stroke="#006060" stroke-width="0.8" /></svg>
<svg class="i" style="left:178px;top:46px" viewBox="0 0 16 16"><circle cx="10.5" cy="2.2" r="1.8" fill="#0000E0" stroke="none" stroke-width="1"/><path d="M9.5 3.5 L5.5 5.5 L3 8 L4.2 9 L6.5 7 L8 6.5 L6.5 10 L3.5 12.5 L1 14 L2 15.5 L5 13.8 L8 11.5 L10 13 L9.5 15.8 H12.5 L12 12 L9.8 9.8 L11 7 L12.5 8.2 L15.2 6.2 L14.2 5 L12.6 6 L11 4 Z" fill="#0000E0" stroke="none" stroke-width="1" /></svg>
<svg class="i" style="left:201px;top:46px" viewBox="0 0 16 16"><circle cx="9" cy="9" r="7.3" fill="#FFFFFF" stroke="none" stroke-width="1"/><circle cx="8" cy="8" r="7.3" fill="#ACA899" stroke="none" stroke-width="1"/></svg>
<svg class="i" style="left:224px;top:46px" viewBox="0 0 16 16"><rect x="11" y="1.5" width="4.5" height="13.5" fill="#FF2000" /><rect x="10.5" y="3" width="5" height="10.5" fill="#FFFF00" /><rect x="11" y="5" width="4.5" height="6" fill="#00E000" /><rect x="13" y="6.5" width="2.5" height="3" fill="#000" /><circle cx="7" cy="2.2" r="1.7" fill="#0000E0" stroke="none" stroke-width="1"/><path d="M6.2 3.5 L3 5.5 L1 8 L2.2 9 L4 7 L5.2 6.5 L4 10 L1.5 12.5 L0.5 14 L1.5 15 L4 13 L5.5 11.5 L7 13 L6.5 15.8 H9 L8.8 12 L7 9.8 L8 7 L9.2 8.2 L10.5 7 L9.8 5.5 L8.8 6 L8 4 Z" fill="#0000E0" stroke="none" stroke-width="1" /></svg>
<svg class="i" style="left:247px;top:46px" viewBox="0 0 16 16"><rect x="10.5" y="0.5" width="5" height="15" fill="#0000C0" /><path d="M15.5 2 Q10.5 8 15.5 14 Z" fill="#00C0FF" stroke="none" stroke-width="1" /><path d="M15.5 3.5 Q11.8 8 15.5 12.5 Z" fill="#00E000" stroke="none" stroke-width="1" /><path d="M15.5 4.8 Q13 8 15.5 11.2 Z" fill="#FFFF00" stroke="none" stroke-width="1" /><path d="M15.5 6 Q14 8 15.5 10 Z" fill="#FF0000" stroke="none" stroke-width="1" /><circle cx="7" cy="2.2" r="1.7" fill="#0000E0" stroke="none" stroke-width="1"/><path d="M6.2 3.5 L3 5.5 L1 8 L2.2 9 L4 7 L5.2 6.5 L4 10 L1.5 12.5 L0.5 14 L1.5 15 L4 13 L5.5 11.5 L7 13 L6.5 15.8 H9 L8.8 12 L7 9.8 L8 7 L9.2 8.2 L10.5 7 L9.8 5.5 L8.8 6 L8 4 Z" fill="#0000E0" stroke="none" stroke-width="1" /></svg>
<svg class="i" style="left:270px;top:46px" viewBox="0 0 16 16"><path d="M2.5 1 V15 M8 1 V15 M13.5 1 V15" fill="none" stroke="#0000A0" stroke-width="2" /><path d="M1 1.5 H4.5 M6.5 1.5 H10 M12 1.5 H15.5 M1 14.5 H4.5 M6.5 14.5 H10 M12 14.5 H15.5" fill="none" stroke="#0000A0" stroke-width="1.4" /><path d="M1 10.5 H4.5 M6.5 4.5 H10 M12 8 H15.5" fill="none" stroke="#E00000" stroke-width="1.6" /></svg>
<svg class="i" style="left:293px;top:46px" viewBox="0 0 16 16"><rect x="0.8" y="2" width="14.5" height="11.5" fill="#fff" stroke="#000080" stroke-width="1.5"/><path d="M1 5 H15" fill="none" stroke="#000080" stroke-width="1.3" /><path d="M2 13 L6.5 6 H9.5 L14 13 M6 9.5 H10" fill="none" stroke="#C00000" stroke-width="1.3" /><rect x="6.5" y="5.5" width="3" height="3" fill="#C00000" /></svg>
<div style="left:314px;top:43px;width:2px;height:22px;background:#fff;border-left:1px solid #ACA899"></div>
<div class="grip" style="left:317px;top:45px"></div>
<svg class="i" style="left:325px;top:46px" viewBox="0 0 16 16"><path d="M5 1 H11 L15.5 8 L11 15 H5 L0.5 8 Z" fill="#fff" stroke="#0000C0" stroke-width="1" /><path d="M8 1 V15" fill="none" stroke="#0000C0" stroke-width="0.7" /><path d="M0.5 8 H15" fill="none" stroke="#0000C0" stroke-width="0.7" /><path d="M8 3 Q12 3 13.5 7.5 M8 13 Q12 13 13.5 8.5 M3 5 Q6 8 3 11" fill="none" stroke="#C00000" stroke-width="0.7" /><circle cx="10.5" cy="5" r="1.6" fill="none" stroke="#C00000" stroke-width="0.7"/><circle cx="10.5" cy="11" r="1.6" fill="none" stroke="#C00000" stroke-width="0.7"/></svg>
<svg class="i" style="left:348px;top:46px" viewBox="0 0 16 16"><circle cx="11.5" cy="2.5" r="3.5" fill="#FFFF40" stroke="none" stroke-width="1"/><rect x="1.5" y="3.5" width="13" height="11" fill="#fff" stroke="#0000C0" stroke-width="1.4"/><path d="M4 1 L8.5 5.5 M6.5 1 L11 6 M9 1.5 L13 6.5 M11.5 2.5 L14.5 6.5" fill="none" stroke="#000" stroke-width="1.4" /><path d="M3.5 9 H6 M3.5 11.5 H6" fill="none" stroke="#E00000" stroke-width="1.3" /><path d="M7.5 9 H13 M7.5 11.5 H13" fill="none" stroke="#C0C0C0" stroke-width="1" /></svg>
<svg class="i" style="left:371px;top:46px" viewBox="0 0 16 16"><path d="M1.5 15 V9 Q1.5 2 9 2 H15" fill="none" stroke="#E00000" stroke-width="1.6" /><path d="M3.2 15 V9.5 Q3.2 3.8 9 3.8 H15" fill="none" stroke="#FFFF00" stroke-width="1.8" /><path d="M5.6 15 V10 Q5.6 6.4 9 6.4 H15" fill="none" stroke="#00E000" stroke-width="3" /><path d="M7.8 15 V10.5 Q7.8 8.6 9.5 8.6 H15" fill="none" stroke="#FFFF00" stroke-width="1.4" /><path d="M9 15 V11 Q9 10 10 10 H15" fill="none" stroke="#E00000" stroke-width="1.4" /></svg>
<svg class="i" style="left:394px;top:46px" viewBox="0 0 16 16"><path d="M4 4.5 Q8 -1 12 4.5 Z" fill="#E00000" stroke="none" stroke-width="1" /><rect x="3" y="4.5" width="10" height="1.6" fill="#FFFF00" /><rect x="3" y="6" width="10" height="2" fill="#00E000" /><path d="M3 8 H13 L11.5 11 H4.5 Z" fill="#0000E0" stroke="none" stroke-width="1" /><rect x="5.5" y="10" width="5" height="3.5" fill="#0000E0" /><rect x="1" y="11.5" width="3" height="3" fill="#FFFF00" /><rect x="12" y="11.5" width="3" height="3" fill="#FFFF00" /><rect x="3" y="12" width="2.5" height="2" fill="#00E000" /><rect x="10.5" y="12" width="2.5" height="2" fill="#00E000" /><path d="M4 4 Q8 0 12 4" fill="none" stroke="#E00000" stroke-width="1.2" /></svg>
<svg class="i" style="left:417px;top:46px" viewBox="0 0 16 16"><rect x="1" y="1.5" width="14" height="13" fill="#fff" stroke="#0000A0" stroke-width="1.1"/><path d="M2 11 Q4 11 4.5 13 Q5 9 6.5 10 Q7.5 10.5 8 3.5 Q8.5 10.5 9.5 10 Q11 9 11.5 13 Q12 11 14 11" fill="none" stroke="#C00000" stroke-width="0.8" /></svg>
<svg class="i" style="left:440px;top:46px" viewBox="0 0 16 16"><path d="M1 4 Q1 1 3.5 1 Q6 1 6 4 Z M10 4 Q10 1 12.5 1 Q15 1 15 4 Z" fill="#E00000" stroke="none" stroke-width="1" /><rect x="0.5" y="4" width="15" height="1.6" fill="#FFFF00" /><rect x="0.5" y="5.5" width="15" height="2.5" fill="#00E000" /><path d="M0.5 8 H15.5 L12 12.5 Q8 17 4 12.5 Z" fill="#0000E0" stroke="none" stroke-width="1" /><path d="M6 4 H10 V8 L8 10 L6 8 Z" fill="#ECE9D8" stroke="none" stroke-width="1" /><path d="M5.5 6 L8 10.5 L10.5 6 L10.5 8.5 L8 12 L5.5 8.5 Z" fill="#00E000" stroke="none" stroke-width="1" /></svg>
<svg class="i" style="left:463px;top:46px" viewBox="0 0 16 16"><rect x="1" y="2" width="14.5" height="12" fill="#0000C0" /><ellipse cx="8.2" cy="8" rx="5.5" ry="4.2" fill="#00E000" stroke="none" stroke-width="1"/><ellipse cx="8.2" cy="8" rx="4" ry="3" fill="#FFFF00" stroke="none" stroke-width="1"/><ellipse cx="8.2" cy="8" rx="2" ry="1.3" fill="#E00000" stroke="none" stroke-width="1"/></svg>
<svg class="i" style="left:486px;top:46px" viewBox="0 0 16 16"><path d="M2 1 V14 M0.5 12.5 H13 M0.5 11 L0.5 14" fill="none" stroke="#0000C0" stroke-width="1.4" /><path d="M3 12 Q9 11 13.5 1" fill="none" stroke="#E00000" stroke-width="1.3" /><text x="3.5" y="7" fill="#C000C0" font-size="7.5" font-weight="bold" font-family="Liberation Sans, sans-serif" >E</text><text x="11" y="13.5" fill="#C000C0" font-size="7" font-weight="bold" font-family="Liberation Sans, sans-serif" >x</text></svg>
<div style="left:507px;top:43px;width:2px;height:22px;background:#fff;border-left:1px solid #ACA899"></div>
<div class="grip" style="left:510px;top:45px"></div>
<svg class="i" style="left:519px;top:46px" viewBox="0 0 16 16"><g transform="translate(1,1)"><text x="0" y="14" fill="#FFFFFF" font-size="11.5" font-weight="normal" font-family="Liberation Sans, sans-serif" textLength="16" lengthAdjust="spacingAndGlyphs" transform="translate(0,-3.5) scale(1,1.25)">ALL</text></g><text x="0" y="14" fill="#ACA899" font-size="11.5" font-weight="normal" font-family="Liberation Sans, sans-serif" textLength="16" lengthAdjust="spacingAndGlyphs" transform="translate(0,-3.5) scale(1,1.25)">ALL</text></svg>
<svg class="i" style="left:542px;top:46px" viewBox="0 0 16 16"><g transform="translate(1,1)"><rect x="0.8" y="0.8" width="14" height="14" fill="none" stroke="#FFFFFF" stroke-width="1.4"/><circle cx="6.5" cy="6" r="4.2" fill="none" stroke="#FFFFFF" stroke-width="1.2"/><path d="M9.5 9 L14 14" fill="none" stroke="#FFFFFF" stroke-width="2" /></g><rect x="0.8" y="0.8" width="14" height="14" fill="none" stroke="#ACA899" stroke-width="1.4"/><circle cx="6.5" cy="6" r="4.2" fill="none" stroke="#ACA899" stroke-width="1.2"/><path d="M9.5 9 L14 14" fill="none" stroke="#ACA899" stroke-width="2" /></svg>
<svg class="i" style="left:565px;top:46px" viewBox="0 0 16 16"><g transform="translate(1,1)"><circle cx="6" cy="6" r="4.6" fill="none" stroke="#FFFFFF" stroke-width="1.2"/><path d="M9.5 9.5 L14.5 14.5" fill="none" stroke="#FFFFFF" stroke-width="2.2" /><path d="M3.5 6 H8.5 M6 3.5 V8.5" fill="none" stroke="#FFFFFF" stroke-width="1.3" /></g><circle cx="6" cy="6" r="4.6" fill="none" stroke="#ACA899" stroke-width="1.2"/><path d="M9.5 9.5 L14.5 14.5" fill="none" stroke="#ACA899" stroke-width="2.2" /><path d="M3.5 6 H8.5 M6 3.5 V8.5" fill="none" stroke="#ACA899" stroke-width="1.3" /></svg>
<svg class="i" style="left:588px;top:46px" viewBox="0 0 16 16"><g transform="translate(1,1)"><circle cx="6" cy="6" r="4.6" fill="none" stroke="#FFFFFF" stroke-width="1.2"/><path d="M9.5 9.5 L14.5 14.5" fill="none" stroke="#FFFFFF" stroke-width="2.2" /><path d="M3.5 6 H8.5" fill="none" stroke="#FFFFFF" stroke-width="1.3" /></g><circle cx="6" cy="6" r="4.6" fill="none" stroke="#ACA899" stroke-width="1.2"/><path d="M9.5 9.5 L14.5 14.5" fill="none" stroke="#ACA899" stroke-width="2.2" /><path d="M3.5 6 H8.5" fill="none" stroke="#ACA899" stroke-width="1.3" /></svg>
<svg class="i" style="left:611px;top:46px" viewBox="0 0 16 16"><g transform="translate(1,1)"><path d="M2.5 3.5 H8 V1.5 H10.5 L13.5 4.5 V14.5 H2.5 Z" fill="none" stroke="#FFFFFF" stroke-width="1.2" /><path d="M6 6 H9.5 V8 M5 6 L6.5 4.8 V7.2 Z M10.5 11 H7 V9 M11.5 11 L10 9.8 V12.2 Z" fill="none" stroke="#FFFFFF" stroke-width="1" /></g><path d="M2.5 3.5 H8 V1.5 H10.5 L13.5 4.5 V14.5 H2.5 Z" fill="none" stroke="#ACA899" stroke-width="1.2" /><path d="M6 6 H9.5 V8 M5 6 L6.5 4.8 V7.2 Z M10.5 11 H7 V9 M11.5 11 L10 9.8 V12.2 Z" fill="none" stroke="#ACA899" stroke-width="1" /></svg>
<div class="vs" style="left:633px;top:45px"></div>
<svg class="i" style="left:640px;top:46px" viewBox="0 0 16 16"><g transform="translate(1,1)"><g transform="rotate(0 8 8)"><path d="M2 8 L7 4.5 V7 H14 V9 H7 V11.5 Z" fill="#FFFFFF" stroke="none" stroke-width="1" /></g></g><g transform="rotate(0 8 8)"><path d="M2 8 L7 4.5 V7 H14 V9 H7 V11.5 Z" fill="#ACA899" stroke="none" stroke-width="1" /></g></svg>
<svg class="i" style="left:663px;top:46px" viewBox="0 0 16 16"><g transform="translate(1,1)"><g transform="rotate(180 8 8)"><path d="M2 8 L7 4.5 V7 H14 V9 H7 V11.5 Z" fill="#FFFFFF" stroke="none" stroke-width="1" /></g></g><g transform="rotate(180 8 8)"><path d="M2 8 L7 4.5 V7 H14 V9 H7 V11.5 Z" fill="#ACA899" stroke="none" stroke-width="1" /></g></svg>
<svg class="i" style="left:686px;top:46px" viewBox="0 0 16 16"><g transform="translate(1,1)"><g transform="rotate(270 8 8)"><path d="M2 8 L7 4.5 V7 H14 V9 H7 V11.5 Z" fill="#FFFFFF" stroke="none" stroke-width="1" /></g></g><g transform="rotate(270 8 8)"><path d="M2 8 L7 4.5 V7 H14 V9 H7 V11.5 Z" fill="#ACA899" stroke="none" stroke-width="1" /></g></svg>
<svg class="i" style="left:709px;top:46px" viewBox="0 0 16 16"><g transform="translate(1,1)"><g transform="rotate(90 8 8)"><path d="M2 8 L7 4.5 V7 H14 V9 H7 V11.5 Z" fill="#FFFFFF" stroke="none" stroke-width="1" /></g></g><g transform="rotate(90 8 8)"><path d="M2 8 L7 4.5 V7 H14 V9 H7 V11.5 Z" fill="#ACA899" stroke="none" stroke-width="1" /></g></svg>
<div style="left:730px;top:43px;width:2px;height:22px;background:#fff;border-left:1px solid #ACA899"></div>
<div class="grip" style="left:732px;top:45px"></div>
<svg class="i" style="left:741px;top:46px" viewBox="0 0 16 16"><g transform="translate(1,1)"><text x="0.5" y="13" fill="#FFFFFF" font-size="11" font-weight="bold" font-family="Liberation Sans, sans-serif" textLength="15" lengthAdjust="spacingAndGlyphs">Vs</text></g><text x="0.5" y="13" fill="#ACA899" font-size="11" font-weight="bold" font-family="Liberation Sans, sans-serif" textLength="15" lengthAdjust="spacingAndGlyphs">Vs</text></svg>
<svg class="i" style="left:764px;top:46px" viewBox="0 0 16 16"><g transform="translate(1,1)"><text x="6" y="13" fill="#FFFFFF" font-size="11" font-weight="bold" font-family="Liberation Sans, sans-serif" >V</text><path d="M0.5 8.5 H5 M3 6.5 L5.5 8.5 L3 10.5 Z" fill="#FFFFFF" stroke="#FFFFFF" stroke-width="1.2" /></g><text x="6" y="13" fill="#ACA899" font-size="11" font-weight="bold" font-family="Liberation Sans, sans-serif" >V</text><path d="M0.5 8.5 H5 M3 6.5 L5.5 8.5 L3 10.5 Z" fill="#ACA899" stroke="#ACA899" stroke-width="1.2" /></svg>
<svg class="i" style="left:787px;top:46px" viewBox="0 0 16 16"><g transform="translate(1,1)"><path d="M1 2.5 H15 M1 14 H15 M8 4 V12.5 M6 6 L8 4 L10 6 M6 10.5 L8 12.5 L10 10.5" fill="none" stroke="#FFFFFF" stroke-width="1.1" /></g><path d="M1 2.5 H15 M1 14 H15 M8 4 V12.5 M6 6 L8 4 L10 6 M6 10.5 L8 12.5 L10 10.5" fill="none" stroke="#ACA899" stroke-width="1.1" /></svg>
<svg class="i" style="left:810px;top:46px" viewBox="0 0 16 16"><g transform="translate(1,1)"><path d="M1 2.5 H15 M1 14 H15" fill="none" stroke="#FFFFFF" stroke-width="1.1" /><text x="5" y="12.5" fill="#FFFFFF" font-size="10" font-weight="bold" font-family="Liberation Sans, sans-serif" >?</text></g><path d="M1 2.5 H15 M1 14 H15" fill="none" stroke="#ACA899" stroke-width="1.1" /><text x="5" y="12.5" fill="#ACA899" font-size="10" font-weight="bold" font-family="Liberation Sans, sans-serif" >?</text></svg>
<svg class="i" style="left:833px;top:46px" viewBox="0 0 16 16"><g transform="translate(1,1)"><path d="M1.5 14 V1.5 H14" fill="none" stroke="#FFFFFF" stroke-width="1.3" /><rect x="4.5" y="4.5" width="10.5" height="10.5" fill="#FFFFFF" /></g><path d="M1.5 14 V1.5 H14" fill="none" stroke="#ACA899" stroke-width="1.3" /><rect x="4.5" y="4.5" width="10.5" height="10.5" fill="#ACA899" /></svg>
<svg class="i" style="left:856px;top:46px" viewBox="0 0 16 16"><g transform="translate(1,1)"><rect x="1" y="5.5" width="9" height="9.5" fill="#FFFFFF" /><path d="M6 1 H15 V10 L12.5 7.5 L9 11 L5 7 L8.5 3.5 Z" fill="#FFFFFF" stroke="none" stroke-width="1" /></g><rect x="1" y="5.5" width="9" height="9.5" fill="#ACA899" /><path d="M6 1 H15 V10 L12.5 7.5 L9 11 L5 7 L8.5 3.5 Z" fill="#ACA899" stroke="none" stroke-width="1" /></svg>
<div style="left:877px;top:43px;width:2px;height:22px;background:#fff;border-left:1px solid #ACA899"></div>
<div class="grip" style="left:879px;top:45px"></div>
<svg class="i" style="left:888px;top:46px" viewBox="0 0 16 16"><rect x="5.5" y="0.5" width="10" height="10.5" fill="#FFFF00" /><rect x="0.5" y="9.5" width="9" height="6" fill="#00E000" /><path d="M5.5 0.5 V11 H16" fill="none" stroke="#000080" stroke-width="1.5" /><path d="M1 11 H5 M5.5 11 V15" fill="none" stroke="#C08000" stroke-width="1" /></svg>
<svg class="i" style="left:911px;top:46px" viewBox="0 0 16 16"><circle cx="8" cy="8" r="7.3" fill="#0000C0" stroke="none" stroke-width="1"/><ellipse cx="9.5" cy="8" rx="5.5" ry="7" fill="#000080" stroke="none" stroke-width="1"/><ellipse cx="5.5" cy="8" rx="3.6" ry="4.6" fill="#0000FF" stroke="none" stroke-width="1"/><ellipse cx="5.2" cy="8" rx="1.6" ry="2.2" fill="#00E0FF" stroke="none" stroke-width="1"/></svg>
<svg class="i" style="left:934px;top:46px" viewBox="0 0 16 16"><rect x="5" y="1" width="10.5" height="10" fill="#FFFF00" /><rect x="0.5" y="9.5" width="8" height="6" fill="#00E000" /><path d="M5 1 V15 M10 1 V11.5 M2 6 H16 M2 11 H16" fill="none" stroke="#000080" stroke-width="1.4" /><path d="M1 15 H8 M8 11 V15 M1 11 V15" fill="none" stroke="#E00000" stroke-width="1" /></svg>
<svg class="i" style="left:957px;top:46px" viewBox="0 0 16 16"><rect x="4" y="1" width="5" height="4" fill="#0000C0" /><rect x="9" y="3" width="4.5" height="4" fill="#00FFFF" /><rect x="0.5" y="5" width="5" height="5" fill="#0000C0" /><rect x="4" y="7" width="5" height="4.5" fill="#FFFF80" /><rect x="9" y="7" width="4" height="3" fill="#0000C0" /><rect x="12.5" y="5" width="3" height="3" fill="#000" /><rect x="4" y="11" width="4" height="3.5" fill="#0000C0" /><rect x="8.5" y="10.5" width="5.5" height="5" fill="#00FFFF" /><rect x="12.5" y="8.5" width="2.5" height="2.5" fill="#000" /><rect x="5" y="4" width="3.5" height="3" fill="#00E0FF" /></svg>
<div class="pr" style="left:977px;top:43px"></div>
<svg class="i" style="left:981px;top:47px" viewBox="0 0 16 16"><rect x="2" y="8.5" width="13" height="6.5" fill="#FFFF00" /><path d="M2 7.5 H14.5 M14.5 1 V15" fill="none" stroke="#000080" stroke-width="1.3" /><text x="2.5" y="14.3" fill="#E00000" font-size="6.5" font-weight="bold" font-family="Liberation Sans, sans-serif" textLength="11.5" lengthAdjust="spacingAndGlyphs">BAR</text></svg>
<svg class="i" style="left:1003px;top:46px" viewBox="0 0 16 16"><rect x="0.5" y="1" width="14.5" height="14" fill="#FFFF00" /><rect x="7" y="0.5" width="6" height="4" fill="#00E000" /><path d="M0.8 0.5 V15 M7 4.8 H15 M7 0.5 V5 M9 0.5 V5 M11 0.5 V5 M13 0.5 V5 M7 0.8 H13" fill="none" stroke="#000080" stroke-width="1.2" /><text x="2.5" y="12.5" fill="#000" font-size="8" font-weight="normal" font-family="Liberation Sans, sans-serif" textLength="12" lengthAdjust="spacingAndGlyphs">XY</text></svg>
<div style="left:1023px;top:43px;width:2px;height:22px;background:#fff;border-left:1px solid #ACA899"></div>
<svg class="i" style="left:1px;top:69px" viewBox="0 0 16 16"><rect x="1.5" y="1.5" width="13" height="13" fill="#808000" stroke="#000"/><rect x="4" y="2" width="8" height="5.5" fill="#fff" /><rect x="4" y="10" width="8" height="4.5" fill="#000" /><rect x="9.5" y="11" width="1.8" height="3" fill="#fff" /><rect x="13" y="2.2" width="1" height="1.3" fill="#000" /></svg>
<div class="vs" style="left:23px;top:68px"></div>
<svg class="i" style="left:30px;top:69px" viewBox="0 0 16 16"><rect x="1" y="0.8" width="14" height="14.4" fill="none" stroke="#000" stroke-width="1.5"/><path d="M8 2 V5 M8 11 V14 M2.5 8 H5.5 M10.5 8 H13.5 M6.5 4.5 L8 6.2 L9.5 4.5 M6.5 11.5 L8 9.8 L9.5 11.5 M4.8 6.5 L6.3 8 L4.8 9.5 M11.2 6.5 L9.7 8 L11.2 9.5" fill="none" stroke="#000" stroke-width="1" /><path d="M2 12.5 H14 M12.5 2 V14" fill="none" stroke="#000" stroke-width="1" stroke-dasharray="1 1.5"/></svg>
<div class="vs" style="left:52px;top:68px"></div>
<svg class="i" style="left:59px;top:69px" viewBox="0 0 16 16"><text x="0" y="14" fill="#0000A0" font-size="11.5" font-weight="normal" font-family="Liberation Sans, sans-serif" textLength="16" lengthAdjust="spacingAndGlyphs" transform="translate(0,-3.5) scale(1,1.25)">ALL</text></svg>
<svg class="i" style="left:82px;top:69px" viewBox="0 0 16 16"><circle cx="6" cy="6" r="4.6" fill="#fff" stroke="#000" stroke-width="1.2"/><path d="M9.5 9.5 L14.5 14.5" fill="none" stroke="#000" stroke-width="2.2" /><path d="M10 9.2 L14.8 14" fill="none" stroke="#fff" stroke-width="0.7" /><path d="M3.5 6 H8.5 M6 3.5 V8.5" fill="none" stroke="#0000C0" stroke-width="1.3" /></svg>
<svg class="i" style="left:105px;top:69px" viewBox="0 0 16 16"><circle cx="6" cy="6" r="4.6" fill="#fff" stroke="#000" stroke-width="1.2"/><path d="M9.5 9.5 L14.5 14.5" fill="none" stroke="#000" stroke-width="2.2" /><path d="M10 9.2 L14.8 14" fill="none" stroke="#fff" stroke-width="0.7" /><path d="M3.5 6 H8.5" fill="none" stroke="#E00000" stroke-width="1.3" /></svg>
<svg class="i" style="left:128px;top:69px" viewBox="0 0 16 16"><path d="M2.5 3.5 H8 V1.5 H10.5 L13.5 4.5 V14.5 H2.5 Z" fill="none" stroke="#000" stroke-width="1.2" /><path d="M6 6 H9.5 V8 M5 6 L6.5 4.8 V7.2 Z M10.5 11 H7 V9 M11.5 11 L10 9.8 V12.2 Z" fill="none" stroke="#000" stroke-width="1" /></svg>
<div class="vs" style="left:150px;top:68px"></div>
<svg class="i" style="left:157px;top:69px" viewBox="0 0 16 16"><path d="M8 1.5 V9 L2.5 14 M8 9 L13.5 14" fill="none" stroke="#E02020" stroke-width="1" /><text x="10.5" y="4.5" fill="#000080" font-size="5" font-weight="bold" font-family="Liberation Sans, sans-serif" >z</text><text x="0.5" y="10.5" fill="#000080" font-size="5" font-weight="bold" font-family="Liberation Sans, sans-serif" >x</text><text x="12.5" y="10.5" fill="#000080" font-size="5" font-weight="bold" font-family="Liberation Sans, sans-serif" >y</text></svg>
<div class="pr" style="left:177px;top:66px"></div>
<svg class="i" style="left:181px;top:70px" viewBox="0 0 16 16"><path d="M4.5 2.5 H11.5" fill="none" stroke="#A00000" stroke-width="1.2" /><path d="M4.5 4.7 H11.5" fill="none" stroke="#E02000" stroke-width="1.2" /><path d="M4.5 6.9 H11.5" fill="none" stroke="#D0D000" stroke-width="1.2" /><path d="M4.5 9.1 H11.5" fill="none" stroke="#60C000" stroke-width="1.2" /><path d="M4.5 11.3 H11.5" fill="none" stroke="#00C000" stroke-width="1.2" /><path d="M4.5 13.5 H11.5" fill="none" stroke="#00E0E0" stroke-width="1.2" /></svg>
<div class="pr" style="left:200px;top:66px"></div>
<svg class="i" style="left:204px;top:70px" viewBox="0 0 16 16"><text x="0.5" y="6.5" fill="#E00000" font-size="6.8" font-weight="bold" font-family="Liberation Sans, sans-serif" textLength="15" lengthAdjust="spacingAndGlyphs">PORT</text><rect x="1" y="8.5" width="14" height="6.5" fill="#fff" stroke="#0000A0" stroke-width="1.2"/><path d="M1 11.7 H15 M4.5 8.5 V15 M8 8.5 V15 M11.5 8.5 V15" fill="none" stroke="#0000A0" stroke-width="1.1" /><path d="M2 10 H14 M2 13.3 H14" fill="none" stroke="#008000" stroke-width="1" stroke-dasharray="2.3 1.2"/></svg>
<svg class="i" style="left:226px;top:69px" viewBox="0 0 16 16"><path d="M1 15 L6.5 4 V15 Z" fill="#E00000" stroke="#000080" stroke-width="1" /><path d="M6.5 4 V15" fill="none" stroke="#000080" stroke-width="1.6" /><path d="M8.5 15 V10 L15.5 15 Z" fill="#fff" stroke="#000080" stroke-width="1.2" /><path d="M14 9 Q14 3.5 9.5 3.5" fill="none" stroke="#000080" stroke-width="1.3" /><path d="M8.5 3.6 L11.3 1.2 V6 Z" fill="#000080" stroke="none" stroke-width="1" /></svg>
<div class="vs" style="left:248px;top:68px"></div>
<svg class="i" style="left:255px;top:69px" viewBox="0 0 16 16"><path d="M1 3 Q4.5 8 8 3 Q11.5 -1 14.5 3 V9 Q11.5 5 8 9 Q4.5 14 1 9 Z" fill="#C00000" stroke="none" stroke-width="1" /><path d="M1 5 Q4.5 10 8 5 Q11.5 1 14.5 5" fill="none" stroke="#E04000" stroke-width="1.2" /><path d="M1 7 Q4.5 12 8 7 Q11.5 3 14.5 7" fill="none" stroke="#00A000" stroke-width="1.6" /><path d="M1 9 Q4.5 14 8 9 Q11.5 5 14.5 9 V11 Q11.5 7 8 11 Q4.5 16 1 11 Z" fill="#0000C0" stroke="none" stroke-width="1" /></svg>
<svg class="i" style="left:278px;top:69px" viewBox="0 0 16 16"><g transform="translate(1,1)"><path d="M1 1 Q4.5 6 8 1 Q11.5 -2 14.5 1 V8 Q11.5 4 8 8 Q4.5 13 1 8 Z" fill="#FFFFFF" stroke="none" stroke-width="1" /><path d="M2 13 H14 M11 10.5 L14.5 13 L11 15.5" fill="none" stroke="#FFFFFF" stroke-width="1.2" /></g><path d="M1 1 Q4.5 6 8 1 Q11.5 -2 14.5 1 V8 Q11.5 4 8 8 Q4.5 13 1 8 Z" fill="#ACA899" stroke="none" stroke-width="1" /><path d="M2 13 H14 M11 10.5 L14.5 13 L11 15.5" fill="none" stroke="#ACA899" stroke-width="1.2" /></svg>
<div class="vs" style="left:300px;top:68px"></div>
<svg class="i" style="left:307px;top:69px" viewBox="0 0 16 16"><g transform="translate(1,1)"><path d="M1 1 H15 V12 L12 15 H1 Z" fill="#FFFFFF" stroke="none" stroke-width="1" /></g><path d="M1 1 H15 V12 L12 15 H1 Z" fill="#ACA899" stroke="none" stroke-width="1" /><path d="M6.5 2 H10 V7.5 H6.5 Z" fill="#D4D0C8" stroke="none" stroke-width="1" /><circle cx="4" cy="5" r="1" fill="#ECE9D8" stroke="none" stroke-width="1"/><circle cx="12" cy="5" r="1" fill="#ECE9D8" stroke="none" stroke-width="1"/><circle cx="4" cy="11" r="1" fill="#ECE9D8" stroke="none" stroke-width="1"/><circle cx="11.5" cy="11" r="1" fill="#ECE9D8" stroke="none" stroke-width="1"/><path d="M3 3 L6 6 M13 8 L10 10 M5 13 L8 10 M8 8 V12" fill="none" stroke="#ECE9D8" stroke-width="1" /><text x="6.8" y="7" fill="#ACA899" font-size="6" font-weight="bold" font-family="Liberation Sans, sans-serif" >1</text></svg>
<div class="vs" style="left:329px;top:68px"></div>
<svg class="i" style="left:336px;top:69px" viewBox="0 0 16 16"><circle cx="8" cy="5.5" r="5.3" fill="#FFFF00" stroke="none" stroke-width="1"/><path d="M6 11 L10 13.5 M10 11 L6 13.5 M6 13.5 L10 15.5 M10 13.5 L6 15.5" fill="none" stroke="#000" stroke-width="1" /></svg>
<div class="vs" style="left:358px;top:68px"></div>
<svg class="i" style="left:365px;top:69px" viewBox="0 0 16 16"><rect x="4" y="6.5" width="11.5" height="7.5" fill="#A00020" stroke="#400010" stroke-width="1"/><rect x="1.3" y="4" width="11.5" height="7.5" fill="#FF20E0" stroke="#000080" stroke-width="1.7"/></svg>
<svg class="i" style="left:388px;top:69px" viewBox="0 0 16 16"><rect x="8.5" y="7.5" width="7" height="7.5" fill="#008080" stroke="#000" stroke-width="1.2"/><rect x="9.5" y="8" width="5" height="3" fill="#fff" /><path d="M4.5 2.5 L11 8.5 L6 14 L0.5 8 Z" fill="#fff" stroke="#000" stroke-width="1.2" /><path d="M5 0.8 Q7.5 0 7 3 V7" fill="none" stroke="#000" stroke-width="1.2" /><path d="M7 5 L5.5 6.8 H8.5 Z" fill="#000" stroke="none" stroke-width="1" /><path d="M11 8.5 Q12.5 9 12 13" fill="none" stroke="#000" stroke-width="1.4" /></svg>
<div style="left:0;top:90px;width:159px;height:742px;border-right:1px solid #ACA899;border-top:1px solid #fff"></div>
<div style="left:159px;top:90px;width:1096px;height:743px;border:1px solid #fff;border-top-color:#716F64;border-left-color:#716F64"></div>
<div class="sunk" style="left:0;top:91px;width:156px;height:20px"></div>
<span class="t" style="left:2px;top:92px;line-height:14px">E-total, dBi (Directivity)</span>
<div style="left:0;top:112px;width:156px;height:657px;background:#fff;border:2px solid #fff;border-top:2px solid #716F64;border-left:2px solid #716F64;border-top-color:#ACA899"></div>
<div style="left:1px;top:113px;width:154px;height:1px;background:#716F64"></div>
<div class="lg" style="top:115px;background:#FF0000"></div>
<span class="lt" style="top:115px">16.8971</span>
<div class="lg" style="top:135px;background:#FF4000"></div>
<span class="lt" style="top:135px">14.8971</span>
<div class="lg" style="top:155px;background:#FF8000"></div>
<span class="lt" style="top:155px">12.8971</span>
<div class="lg" style="top:175px;background:#FFC000"></div>
<span class="lt" style="top:175px">10.8971</span>
<div class="lg" style="top:195px;background:#F0FF00"></div>
<span class="lt" style="top:195px">8.8971</span>
<div class="lg" style="top:215px;background:#B0FF00"></div>
<span class="lt" style="top:215px">6.8971</span>
<div class="lg" style="top:235px;background:#60F000"></div>
<span class="lt" style="top:235px">4.8971</span>
<div class="lg" style="top:255px;background:#20E000"></div>
<span class="lt" style="top:255px">2.8971</span>
<div class="lg" style="top:275px;background:#00E010"></div>
<span class="lt" style="top:275px">0.8971</span>
<div class="lg" style="top:295px;background:#00F060"></div>
<span class="lt" style="top:295px">-1.1029</span>
<div class="lg" style="top:315px;background:#00F0A0"></div>
<span class="lt" style="top:315px">-3.1029</span>
<div class="lg" style="top:335px;background:#00F0F0"></div>
<span class="lt" style="top:335px">-5.1029</span>
<div class="lg" style="top:355px;background:#00B4F8"></div>
<span class="lt" style="top:355px">-7.1029</span>
<div class="lg" style="top:375px;background:#0080F8"></div>
<span class="lt" style="top:375px">-9.1029</span>
<div class="lg" style="top:395px;background:#0040F8"></div>
<span class="lt" style="top:395px">-11.1029</span>
<div style="left:2px;top:415px;width:152px;height:20px;background:#0000FF"></div>
<div style="left:2px;top:415px;width:50px;height:20px;border:1px dotted #E8D870"></div>
<div style="left:42px;top:416px;width:10px;height:18px;background:#fff"></div>
<span class="lt" style="top:415px;color:#fff">-13.1029</span>
<div class="sunk" style="left:0;top:771px;width:156px;height:61px"></div>
<span class="t" style="left:1px;top:773px;line-height:13px">Pattern ID: None</span>
<span class="t" style="left:1px;top:786px;line-height:13px">Freq: 2.45 (GHz)</span>
<span class="t" style="left:1px;top:799px;line-height:13px">Magnitude: E-total</span>
<span class="t" style="left:1px;top:812px;line-height:13px">Color: dBi(Directivity)</span>
<svg style="left:160px;top:91px" width="1094" height="741" viewBox="160 91 1094 741">
<defs>
<radialGradient id="bg" gradientUnits="userSpaceOnUse" cx="778" cy="556" r="492" gradientTransform="translate(778,556) scale(1,1.32) translate(-778,-556)">
<stop offset="0" stop-color="#06A030"/><stop offset="0.10" stop-color="#10A818"/><stop offset="0.19" stop-color="#44B200"/><stop offset="0.28" stop-color="#90C400"/>
<stop offset="0.37" stop-color="#CCC800"/><stop offset="0.45" stop-color="#D8A000"/><stop offset="0.55" stop-color="#E07400"/><stop offset="0.66" stop-color="#E84C00"/>
<stop offset="0.78" stop-color="#EE3000"/><stop offset="0.90" stop-color="#F61C00"/><stop offset="1" stop-color="#FF1000"/>
</radialGradient>
<radialGradient id="bg2" gradientUnits="userSpaceOnUse" cx="778" cy="556" r="492" gradientTransform="translate(778,556) scale(1,0.72) translate(-778,-556)">
<stop offset="0" stop-color="#06A030"/><stop offset="0.10" stop-color="#10A818"/><stop offset="0.19" stop-color="#44B200"/><stop offset="0.28" stop-color="#90C400"/>
<stop offset="0.37" stop-color="#CCC800"/><stop offset="0.45" stop-color="#D8A000"/><stop offset="0.55" stop-color="#E07400"/><stop offset="0.66" stop-color="#E84C00"/>
<stop offset="0.78" stop-color="#EE3000"/><stop offset="0.90" stop-color="#F61C00"/><stop offset="1" stop-color="#FF1000"/>
</radialGradient>
<linearGradient id="sh" gradientUnits="userSpaceOnUse" x1="0" y1="345" x2="0" y2="692">
<stop offset="0" stop-color="#000" stop-opacity="0.10"/><stop offset="0.12" stop-color="#000" stop-opacity="0.02"/><stop offset="0.35" stop-color="#000" stop-opacity="0.0"/><stop offset="0.55" stop-color="#000" stop-opacity="0.04"/>
<stop offset="0.8" stop-color="#000" stop-opacity="0.15"/><stop offset="1" stop-color="#000" stop-opacity="0.42"/>
</linearGradient>
<linearGradient id="pl" gradientUnits="userSpaceOnUse" x1="796" y1="0" x2="972" y2="0">
<stop offset="0" stop-color="#1E6E8C" stop-opacity="0.12"/><stop offset="0.5" stop-color="#1E6E8C" stop-opacity="0.03"/><stop offset="1" stop-color="#1E6E8C" stop-opacity="0"/>
</linearGradient>
<linearGradient id="lb" gradientUnits="userSpaceOnUse" x1="785" y1="535" x2="836" y2="548">
<stop offset="0" stop-color="#18A038"/><stop offset="0.3" stop-color="#108840"/><stop offset="0.55" stop-color="#087048"/><stop offset="0.78" stop-color="#004848"/><stop offset="0.92" stop-color="#002038"/><stop offset="1" stop-color="#000820"/>
</linearGradient>
<filter id="bl" x="-10%" y="-10%" width="120%" height="120%"><feGaussianBlur stdDeviation="7"/></filter>
<linearGradient id="emg" gradientUnits="userSpaceOnUse" x1="440" y1="0" x2="600" y2="0"><stop offset="0" stop-color="#000"/><stop offset="1" stop-color="#fff"/></linearGradient><mask id="em" maskUnits="userSpaceOnUse" x="250" y="300" width="650" height="450"><rect x="250" y="300" width="650" height="450" fill="url(#emg)"/></mask>
<clipPath id="hU"><rect x="250" y="300" width="650" height="256"/></clipPath><clipPath id="hL"><rect x="250" y="556" width="650" height="200"/></clipPath>
<clipPath id="cC"><rect x="280" y="330" width="360" height="170"/></clipPath><clipPath id="cA"><rect x="280" y="480" width="280" height="220"/></clipPath><clipPath id="cD"><rect x="560" y="330" width="290" height="215"/></clipPath><clipPath id="cB"><rect x="560" y="545" width="290" height="160"/></clipPath>
<clipPath id="bc"><polygon points="288.75,492.5 293.75,472.5 302.5,445 320,420 337.5,402.5 357.5,388.75 377.5,375 410,361.25 442.5,352.5 470,347.5 500,344.25 530,345 562.5,347 590,352.5 620,358 645,367.5 670,376.25 700,391.25 725,405 750,422.5 772.5,440 795,461.25 810,480 820,500 828.75,520 835,535 836,547.5 835,557.5 830,570 820,580 810,595 797.5,610 785,620 767.5,632.5 750,642.5 735,650 715,660 695,667.5 667.5,675 645,682.5 622.5,686 592.5,690 560,691.25 530,690.5 495,685.5 465,680 435,670 407.5,660 380,643.75 353.75,627.5 332.5,605 315,586.25 302.5,560 293.75,540 291.25,520"/></clipPath>
</defs>
<rect x="160" y="91" width="1094" height="741" fill="#66D6FA"/>
<polygon points="796,461 972,478 955,701 797.5,611" fill="#14222A"/>
<path d="M796.0 461.0L797.5 611.0M797.5 461.1L798.9 611.8M799.1 461.3L800.4 612.6M800.6 461.4L801.8 613.5M802.2 461.6L803.3 614.3M803.8 461.8L804.8 615.1M805.4 461.9L806.3 616.0M807.0 462.1L807.8 616.9M808.7 462.2L809.3 617.7M810.3 462.4L810.8 618.6M812.0 462.5L812.4 619.5M813.7 462.7L813.9 620.4M815.4 462.9L815.5 621.3M817.1 463.0L817.1 622.2M818.9 463.2L818.7 623.1M820.7 463.4L820.3 624.1M822.4 463.6L822.0 625.0M824.2 463.7L823.6 625.9M826.1 463.9L825.3 626.9M827.9 464.1L827.0 627.9M829.8 464.3L828.7 628.8M831.6 464.4L830.4 629.8M833.5 464.6L832.2 630.8M835.5 464.8L833.9 631.8M837.4 465.0L835.7 632.8M839.4 465.2L837.5 633.9M841.4 465.4L839.3 634.9M843.4 465.6L841.1 635.9M845.4 465.8L843.0 637.0M847.4 466.0L844.9 638.1M849.5 466.2L846.7 639.1M851.6 466.4L848.6 640.2M853.7 466.6L850.6 641.3M855.9 466.8L852.5 642.4M858.1 467.0L854.5 643.6M860.3 467.2L856.5 644.7M862.5 467.4L858.5 645.9M864.7 467.6L860.5 647.0M867.0 467.9L862.6 648.2M869.3 468.1L864.7 649.4M871.7 468.3L866.8 650.6M874.0 468.5L868.9 651.8M876.4 468.8L871.0 653.0M878.8 469.0L873.2 654.3M881.3 469.2L875.4 655.5M883.8 469.5L877.6 656.8M886.3 469.7L879.9 658.1M888.8 470.0L882.1 659.4M891.4 470.2L884.4 660.7M894.0 470.5L886.7 662.0M896.6 470.7L889.1 663.3M899.3 471.0L891.5 664.7M902.0 471.2L893.9 666.1M904.8 471.5L896.3 667.5M907.5 471.8L898.8 668.9M910.4 472.0L901.3 670.3M913.2 472.3L903.8 671.7M916.1 472.6L906.3 673.2M919.0 472.9L908.9 674.7M922.0 473.2L911.5 676.2M925.0 473.5L914.2 677.7M928.1 473.8L916.9 679.2M931.2 474.1L919.6 680.8M934.3 474.4L922.3 682.3M937.5 474.7L925.1 683.9M940.7 475.0L927.9 685.5M944.0 475.3L930.8 687.2M947.3 475.6L933.7 688.8M950.7 475.9L936.6 690.5M954.1 476.3L939.6 692.2M957.6 476.6L942.6 693.9M961.1 476.9L945.6 695.6M964.7 477.3L948.7 697.4M968.3 477.6L951.8 699.2M972.0 478.0L955.0 701.0" stroke="#22709A" stroke-width="0.78" fill="none"/>
<path d="M796.0 461.0L972.0 478.0M796.0 464.0L971.6 482.6M796.1 467.0L971.3 487.2M796.1 470.0L970.9 491.8M796.1 472.9L970.6 496.4M796.1 475.9L970.3 500.9M796.2 478.8L969.9 505.4M796.2 481.8L969.6 509.9M796.2 484.7L969.2 514.4M796.3 487.6L968.9 518.9M796.3 490.5L968.5 523.3M796.3 493.4L968.2 527.8M796.4 496.3L967.9 532.2M796.4 499.2L967.5 536.5M796.4 502.1L967.2 540.9M796.4 505.0L966.9 545.3M796.5 507.8L966.5 549.6M796.5 510.7L966.2 553.9M796.5 513.6L965.9 558.2M796.6 516.4L965.6 562.4M796.6 519.2L965.2 566.7M796.6 522.1L964.9 570.9M796.6 524.9L964.6 575.1M796.7 527.7L964.3 579.3M796.7 530.5L964.0 583.5M796.7 533.3L963.6 587.7M796.8 536.1L963.3 591.8M796.8 538.8L963.0 595.9M796.8 541.6L962.7 600.1M796.8 544.4L962.4 604.1M796.9 547.1L962.1 608.2M796.9 549.9L961.8 612.3M796.9 552.6L961.5 616.3M796.9 555.3L961.1 620.3M797.0 558.1L960.8 624.3M797.0 560.8L960.5 628.3M797.0 563.5L960.2 632.3M797.1 566.2L959.9 636.2M797.1 568.9L959.6 640.2M797.1 571.6L959.3 644.1M797.1 574.3L959.0 648.0M797.2 576.9L958.7 651.9M797.2 579.6L958.4 655.8M797.2 582.2L958.2 659.6M797.2 584.9L957.9 663.5M797.3 587.5L957.6 667.3M797.3 590.2L957.3 671.1M797.3 592.8L957.0 674.9M797.3 595.4L956.7 678.7M797.4 598.0L956.4 682.4M797.4 600.6L956.1 686.2M797.4 603.2L955.8 689.9M797.4 605.8L955.6 693.6M797.5 608.4L955.3 697.3M797.5 611.0L955.0 701.0" stroke="#22709A" stroke-width="0.5" fill="none"/>
<polygon points="796,461 972,478 955,701 797.5,611" fill="url(#pl)"/>
<polyline points="848.1,538.6 865.5,487.8 881.4,547.2 911.9,493.6 929.3,567.5" fill="none" stroke="#2C88AC" stroke-opacity="0.5" stroke-width="2.6" stroke-linejoin="round"/>
<polyline points="853.9,634.2 877.1,584.9 895.9,657.4 923.5,602.3 942.3,671.9" fill="none" stroke="#2C88AC" stroke-opacity="0.5" stroke-width="2.6" stroke-linejoin="round"/>
<polygon points="288.75,492.5 293.75,472.5 302.5,445 320,420 337.5,402.5 357.5,388.75 377.5,375 410,361.25 442.5,352.5 470,347.5 500,344.25 530,345 562.5,347 590,352.5 620,358 645,367.5 670,376.25 700,391.25 725,405 750,422.5 772.5,440 795,461.25 810,480 820,500 828.75,520 835,535 836,547.5 835,557.5 830,570 820,580 810,595 797.5,610 785,620 767.5,632.5 750,642.5 735,650 715,660 695,667.5 667.5,675 645,682.5 622.5,686 592.5,690 560,691.25 530,690.5 495,685.5 465,680 435,670 407.5,660 380,643.75 353.75,627.5 332.5,605 315,586.25 302.5,560 293.75,540 291.25,520" fill="url(#bg)" stroke="#401000" stroke-opacity="0.55" stroke-width="1"/>
<polygon points="288.75,492.5 293.75,472.5 302.5,445 320,420 337.5,402.5 357.5,388.75 377.5,375 410,361.25 442.5,352.5 470,347.5 500,344.25 530,345 562.5,347 590,352.5 620,358 645,367.5 670,376.25 700,391.25 725,405 750,422.5 772.5,440 795,461.25 810,480 820,500 828.75,520 835,535 836,547.5 835,557.5 830,570 820,580 810,595 797.5,610 785,620 767.5,632.5 750,642.5 735,650 715,660 695,667.5 667.5,675 645,682.5 622.5,686 592.5,690 560,691.25 530,690.5 495,685.5 465,680 435,670 407.5,660 380,643.75 353.75,627.5 332.5,605 315,586.25 302.5,560 293.75,540 291.25,520" fill="url(#bg2)" clip-path="url(#hL)"/>
<g clip-path="url(#bc)">
<g mask="url(#em)"><polygon points="288.75,492.5 293.75,472.5 302.5,445 320,420 337.5,402.5 357.5,388.75 377.5,375 410,361.25 442.5,352.5 470,347.5 500,344.25 530,345 562.5,347 590,352.5 620,358 645,367.5 670,376.25 700,391.25 725,405 750,422.5 772.5,440 795,461.25 810,480 820,500 828.75,520 835,535 836,547.5 835,557.5 830,570 820,580 810,595 797.5,610 785,620 767.5,632.5 750,642.5 735,650 715,660 695,667.5 667.5,675 645,682.5 622.5,686 592.5,690 560,691.25 530,690.5 495,685.5 465,680 435,670 407.5,660 380,643.75 353.75,627.5 332.5,605 315,586.25 302.5,560 293.75,540 291.25,520" fill="none" stroke="#180600" stroke-width="26" stroke-opacity="0.2" filter="url(#bl)"/></g>
<polyline points="302.5,445 320,420 337.5,402.5 357.5,388.75 377.5,375 410,361.25 442.5,352.5 470,347.5" fill="none" stroke="#180400" stroke-width="1.6" stroke-opacity="0.85"/>
<polyline points="530,345 562.5,347 590,352.5 620,358" fill="none" stroke="#301800" stroke-width="2.5" stroke-opacity="0.6"/>
<polygon points="288.75,492.5 293.75,472.5 302.5,445 320,420 337.5,402.5 357.5,388.75 377.5,375 410,361.25 442.5,352.5 470,347.5 500,344.25 530,345 562.5,347 590,352.5 620,358 645,367.5 670,376.25 700,391.25 725,405 750,422.5 772.5,440 795,461.25 810,480 820,500 828.75,520 835,535 836,547.5 835,557.5 830,570 820,580 810,595 797.5,610 785,620 767.5,632.5 750,642.5 735,650 715,660 695,667.5 667.5,675 645,682.5 622.5,686 592.5,690 560,691.25 530,690.5 495,685.5 465,680 435,670 407.5,660 380,643.75 353.75,627.5 332.5,605 315,586.25 302.5,560 293.75,540 291.25,520" fill="url(#sh)"/>
<polygon points="376,481 521.2,481.2 640,484.4 521.2,484.6" fill="#100800" fill-opacity="0.27" />
<polygon points="385,489 503.25,488.9 600,491.8 503.25,492.3" fill="#100800" fill-opacity="0.27" />
<polygon points="392,497 533.9,498.2 650,502.2 533.9,501.6" fill="#100800" fill-opacity="0.27" />
<polygon points="394,505 512.8,505.2 610,508.2 512.8,508.6" fill="#100800" fill-opacity="0.27" />
<polygon points="392,512 539.4,513.6 660,517.9 539.4,517.0" fill="#100800" fill-opacity="0.27" />
<polygon points="387.5,517.6 515.375,519.6 620,524.1 515.375,523.0" fill="#100800" fill-opacity="0.27" />
<polygon points="383,521 540.85,525.9 670,532.8 540.85,529.3" fill="#100800" fill-opacity="0.27" />
<polygon points="376,524.4 521.2,530.9 640,539.2 521.2,534.3" fill="#100800" fill-opacity="0.27" />
<polygon points="360,528 492.0,535.1 600,543.8 492.0,538.5" fill="#100800" fill-opacity="0.27" />
<polygon points="340,532 461.0,538.5 560,546.7 461.0,541.9" fill="#100800" fill-opacity="0.27" />
<polygon points="321,535 430.45,541.1 520,548.9 430.45,544.5" fill="#100800" fill-opacity="0.27" />
<polygon points="295.3,540.4 307.8,538.8 339.7,532.4 371.6,525.6 389.8,516.4 395.5,505.1 392.1,493.7 371.6,480.0 353.3,473.2 288.4,470.9 288.4,502.8" fill="#FF2000" fill-opacity="0.22" />
<g clip-path="url(#cC)">
<polygon points="288.3,490.8 325.5,454.7 343.0,462.4 381.3,483.2 392.3,496.3" fill="#100800" fill-opacity="0.2" />
<polygon points="343.0,463.5 425.1,440.5 475.5,460.2" fill="#100800" fill-opacity="0.13" />
<polygon points="366.0,471.1 477.6,461.3 525.8,479.9 427.3,474.4" fill="#100800" fill-opacity="0.2" />
<polygon points="381.3,481.4 525.8,480.6 565.0,496.3 482.0,487.6" fill="#100800" fill-opacity="0.2" />
<polygon points="482.0,460.2 565.0,449.3 626.5,465.7 565.0,472.2 532.4,467.9" fill="#100800" fill-opacity="0.16" />
<polygon points="425.1,440.5 466.7,412.0 565.0,416.4 613.4,424.1 482.0,460.2" fill="#100800" fill-opacity="0.05" />
<polygon points="325.5,454.7 379.1,421.9 425.1,440.5 343.0,463.5" fill="#100800" fill-opacity="0.06" />
</g>
<g clip-path="url(#cA)">
<polygon points="295.3,539.7 461.5,561.5 461.5,564.7" fill="#100800" fill-opacity="0.49" />
<polygon points="295.3,540.6 408.0,571.6 408.0,574.1" fill="#100800" fill-opacity="0.49" />
<polygon points="417.1,573.4 565.0,547.7 565.0,555.6 480.9,566.6" fill="#100800" fill-opacity="0.61" />
<polygon points="420,573.5 500,567.5 565,569.5 565,573.3 500,573.3" fill="#100800" fill-opacity="0.55" />
<polygon points="538,560 565,557.3 565,562.6" fill="#100800" fill-opacity="0.55" />
<polygon points="295,539.7 565,546.3 565,548.6" fill="#100800" fill-opacity="0.49" />
<polygon points="295,539.7 514.9,553.3 514.9,556.6" fill="#100800" fill-opacity="0.51" />
<polygon points="295,539.7 359.4,577.6 359.4,582" fill="#100800" fill-opacity="0.51" />
<polygon points="523.5,660.0 565.0,645.8 565.0,649.2" fill="#100800" fill-opacity="0.55" />
<polygon points="547.6,622.8 565.0,618.5 565.0,620.3" fill="#100800" fill-opacity="0.49" />
<polygon points="364.7,580.2 412.6,574.5 529.9,591.6" fill="#100800" fill-opacity="0.61" />
<polygon points="328.3,586.6 362.4,582.5 442.2,609.8" fill="#100800" fill-opacity="0.61" />
<polygon points="453.6,611.0 565.0,591.6 565.0,599.4" fill="#100800" fill-opacity="0.61" />
<polygon points="380.7,625.3 449.0,611.7 533.3,623.5" fill="#100800" fill-opacity="0.67" />
<polygon points="318.0,588.2 327.1,587.1 376.1,625.8 355.6,628.1" fill="#100800" fill-opacity="0.55" />
<polygon points="449.0,650.8 565.0,623.1 565.0,633.1" fill="#100800" fill-opacity="0.67" />
<polygon points="357.9,628.1 380.7,625.8 442.2,650.8 410.3,660.0" fill="#100800" fill-opacity="0.67" />
<polygon points="410.3,660.0 442.2,652.0 510.5,665.6 474.1,680.5" fill="#100800" fill-opacity="0.75" />
<polygon points="474.1,680.5 512.8,665.6 565.0,667.2 565.0,674.1 512.8,675.9" fill="#100800" fill-opacity="0.75" />
<polygon points="526.5,690.7 565.0,678.2 565.0,691.8" fill="#100800" fill-opacity="0.67" />
<polygon points="512.8,675.9 565.0,674.1 565.0,678.2 526.5,690.7 474.1,680.5" fill="#100800" fill-opacity="0.51" />
<polygon points="289.6,541.5 295.3,539.7 328.3,586.6 318.0,588.2" fill="#100800" fill-opacity="0.12" />
</g>
<g clip-path="url(#cA)">
<polygon points="468.9,499.6 560.3,502.3 560.3,510.8" fill="#100800" fill-opacity="0.2" />
<polygon points="489.2,514.9 560.3,514.5 560.3,520.2" fill="#100800" fill-opacity="0.15" />
<polygon points="479.0,482.0 560.3,481.7 560.3,485.8" fill="#100800" fill-opacity="0.2" />
</g>
<g clip-path="url(#cD)">
<polygon points="540.0,481.3 635.5,483.4 743.3,521.0 635.5,492.5 540.0,485.4" fill="#100800" fill-opacity="0.2" />
<polygon points="540.0,496.6 627.4,521.0 540.0,506.7" fill="#100800" fill-opacity="0.2" />
<polygon points="586.7,499.6 743.3,523.0 641.6,508.8" fill="#100800" fill-opacity="0.25" />
<polygon points="540.0,511.8 625.4,523.0 540.0,518.9" fill="#100800" fill-opacity="0.15" />
<polygon points="615.2,511.8 745.3,527.1 670.1,521.0" fill="#100800" fill-opacity="0.2" />
<polygon points="540.0,527.1 611.1,531.1 540.0,530.1" fill="#100800" fill-opacity="0.2" />
<polygon points="540.0,536.2 601.0,538.3 540.0,538.9" fill="#100800" fill-opacity="0.2" />
<polygon points="540.0,553.5 637.6,530.1 743.3,541.3 743.3,545.4 637.6,541.3" fill="#100800" fill-opacity="0.2" />
<polygon points="635.5,529.1 670.1,472.2 800.0,460.0 800.0,527.1 743.3,521.0" fill="#100800" fill-opacity="0.04" />
</g>
<g clip-path="url(#cB)">
<polygon points="555.0,548.3 555.0,556.3 682.6,552.4 750.9,555.2 682.6,548.3" fill="#100800" fill-opacity="0.55" />
<polygon points="555.0,557.9 555.0,563.4 691.7,559.7" fill="#100800" fill-opacity="0.49" />
<polygon points="555.0,570.0 555.0,573.8 623.3,572.3" fill="#100800" fill-opacity="0.43" />
<polygon points="546.6,590.7 619.9,577.9 691.7,570.0 760.0,564.7 691.7,574.5 619.9,583.4" fill="#100800" fill-opacity="0.55" />
<polygon points="555.0,593.9 555.0,600.7 648.4,591.6 696.2,583.6 778.2,571.1 696.2,580.2" fill="#100800" fill-opacity="0.55" />
<polygon points="555.0,616.7 555.0,621.2 700.8,612.1 782.8,587.1 700.8,607.6 630.2,614.4" fill="#100800" fill-opacity="0.61" />
<polygon points="555.0,625.8 555.0,634.9 623.3,622.4 700.8,613.3 623.3,625.8" fill="#100800" fill-opacity="0.55" />
<polygon points="555.0,648.6 555.0,654.3 646.1,628.1 714.5,607.6 796.5,580.2 714.5,603.0 646.1,621.2" fill="#100800" fill-opacity="0.61" />
<polygon points="586.9,666.8 659.8,639.5 728.1,614.4 805.6,580.2 728.1,609.8" fill="#100800" fill-opacity="0.49" />
<polygon points="555.0,666.8 641.6,662.2 705.3,644.0 760.0,621.2 805.6,593.9 812.4,587.1 782.8,616.7 737.2,648.6 696.2,664.5 646.1,682.7 589.2,690.7 555.0,690.7" fill="#100800" fill-opacity="0.72" />
<polygon points="650.7,683.4 691.7,672.0 682.6,679.3" fill="#E8E000" fill-opacity="1" />
<polygon points="714.5,660.0 760.0,637.2 732.7,655.4" fill="#60E000" fill-opacity="1" />
</g>
</g>
<polygon points="832.5,527.6 839.3,524.2 842.8,537.8 843.9,549.2 839.3,558.3 841.6,569.7 832.5,576.6 825.7,581.1 830.2,562.9" fill="#0828D8" fill-opacity="0.8" />
<polygon points="818.8,584.5 826.8,576.6 821.1,587.9 814.3,592.5" fill="#20C8E0" fill-opacity="0.8" />
<polygon points="760.8,514.5 771.0,508.8 779.0,508.8 775.6,524.2 769.9,523.0" fill="#0A6418" fill-opacity="0.9" />
<polygon points="769.9,508.2 785.8,508.2 789.2,499.1 793.2,504.8 786.9,512.8 776.7,517.3 768.7,514.5" fill="#1CC838" fill-opacity="1" />
<polygon points="785.8,508.2 802.9,516.2 800.6,527.6 789.2,524.2 776.7,517.3 786.9,512.8" fill="#109030" fill-opacity="0.85" />
<path d="M758.5 526 Q745.5 524 745.5 540 Q745.5 555 758 554" fill="none" stroke="#0C6418" stroke-width="4" stroke-opacity="0.9"/>
<path d="M752 526 H760 M752 554.5 H766" fill="none" stroke="#063C0C" stroke-width="1.6"/>
<polygon points="821.1,516.2 830.2,524.2 838.2,542.4 835.9,559.5 826.8,576.6 820.0,572.0 830.2,546.9 826.8,527.6" fill="#001828" fill-opacity="0.85" />
<ellipse cx="811" cy="542.5" rx="26.5" ry="22" fill="url(#lb)"/>
<path d="M786 534 Q788 522 800 519" fill="none" stroke="#063C0C" stroke-width="1.8"/>
<polygon points="786.9,529.9 800.6,523.0 802.9,558.3 789.2,562.9 784.7,546.9" fill="#28B038" fill-opacity="0.45" />
<polygon points="802.9,524.2 814.3,520.8 816.6,560.6 804.0,562.9" fill="#000" fill-opacity="0.06" />
<polygon points="816.6,521.9 825.7,524.2 827.9,553.8 817.7,559.5" fill="#000" fill-opacity="0.06" />
<polygon points="756.2,564.0 784.7,559.2 784.7,562.9 757.3,566.5" fill="#043808" fill-opacity="0.95" />
<polygon points="768.7,574.5 798.3,564.6 799.5,568.4" fill="#043808" fill-opacity="0.95" />
<polygon points="781.3,577.9 809.7,571.4 809.7,573.7" fill="#043808" fill-opacity="0.9" />
<polygon points="792.6,581.7 812.0,575.6 812.0,577.9" fill="#043808" fill-opacity="0.9" />
<polygon points="732.3,558.1 757.3,556.6 757.3,558.3 732.3,559.0" fill="#043808" fill-opacity="0.8" />
<polygon points="750.5,552.1 764.2,553.2 764.2,555.5 751.6,554.9" fill="#043808" fill-opacity="0.8" />
<polygon points="730.0,569.7 767.6,568.6 793.8,562.9 767.6,572.0 730.0,576.6" fill="#30E040" fill-opacity="0.5" />
<polygon points="752.8,590.2 793.8,574.3 809.7,569.7 793.8,577.7 757.3,594.8" fill="#30E048" fill-opacity="0.5" />
<text transform="translate(227,453.5) rotate(97.5) skewX(-14) scale(2.68,1.12)" fill="#E6E644" stroke="#E6E644" stroke-width="0.25" font-family="DejaVu Sans Light, DejaVu Sans, Liberation Sans, sans-serif" font-weight="200" font-size="16" letter-spacing="0.6">(0,0)</text>
<path d="M296 738 L305 665" stroke="#F07878" stroke-width="2" stroke-dasharray="28 3" fill="none"/>
<path d="M222 731.5 L245 733 M247 733.5 L295 739" stroke="#7878F0" stroke-width="2" fill="none"/>
<path d="M295 733 L289 759" stroke="#78F078" stroke-width="2.4" fill="none"/>
</svg>
<div style="left:1256px;top:66px;width:23px;height:2px;background:#fff;border-top:1px solid #ACA899"></div>
<div style="left:1256px;top:70px;width:23px;height:3px;background:#fff;border-bottom:1px solid #ACA899;border-right:1px solid #ACA899"></div>
<svg class="i" style="left:1259px;top:78px" viewBox="0 0 16 16"><path d="M0.5 2.5 H11 L15.5 8.5 H5 Z" fill="#00E000" stroke="#008000" stroke-width="0.8" /></svg>
<svg class="i" style="left:1259px;top:100px" viewBox="0 0 16 16"><path d="M1 2 H15 V6 H10 V15 H6 V6 H1 Z" fill="#00E000" stroke="#008000" stroke-width="0.6" /></svg>
<svg class="i" style="left:1259px;top:122px" viewBox="0 0 16 16"><path d="M1 1 H5 L8 6 L11 1 H15 L10 9 V15 H6 V9 Z" fill="#00E000" stroke="#008000" stroke-width="0.6" /></svg>
<svg class="i" style="left:1259px;top:144px" viewBox="0 0 16 16"><path d="M1 6 H8 V3.5 H15 V12.5 H8 V10 H1 Z" fill="#00E000" stroke="#008000" stroke-width="0.6" /><line x1="8" y1="3.5" x2="8" y2="12.5" stroke="#008000" stroke-width="0.8" /></svg>
<svg class="i" style="left:1259px;top:166px" viewBox="0 0 16 16"><path d="M1 3 H9 L14 7 V15 H10 V8.5 L8 7 H1 Z" fill="#00E000" stroke="#008000" stroke-width="0.6" /></svg>
<svg class="i" style="left:1259px;top:194px" viewBox="0 0 16 16"><ellipse cx="8" cy="8" rx="7" ry="3.8" fill="#00E000" stroke="#008000" stroke-width="0.8"/></svg>
<svg class="i" style="left:1259px;top:217px" viewBox="0 0 16 16"><ellipse cx="8" cy="8" rx="6" ry="3.6" fill="none" stroke="#00E000" stroke-width="2.2"/></svg>
<svg class="i" style="left:1259px;top:238px" viewBox="0 0 16 16"><path d="M2 11 Q2 5 8 5 Q13.5 5 14 10 L11 9.5 Q10.5 8 8 8 Q5 8 5 11 Z" fill="#00E000" stroke="#008000" stroke-width="0.6" /></svg>
<svg class="i" style="left:1259px;top:265px" viewBox="0 0 16 16"><path d="M3 3 H13 V11 Q13 14 8 14 Q3 14 3 11 Z" fill="#00E000" stroke="#008000" stroke-width="0.8" /><ellipse cx="5" cy="8" rx="2.3" ry="5.5" fill="#008000" stroke="#004000" stroke-width="0.8"/><ellipse cx="8" cy="3" rx="5" ry="1.6" fill="#00E000" stroke="#008000" stroke-width="0.8"/></svg>
<svg class="i" style="left:1259px;top:288px" viewBox="0 0 16 16"><path d="M2 3 L6 1 L15 9 L13 13 L9 13.5 Z" fill="#00E000" stroke="#008000" stroke-width="0.8" /><ellipse cx="4" cy="4.5" rx="3" ry="3.5" fill="#008000" stroke="#004000" stroke-width="0.8"/><path d="M9 13.5 L11 8.5 L15 9" fill="none" stroke="#008000" stroke-width="0.8" /></svg>
<svg class="i" style="left:1259px;top:316px" viewBox="0 0 16 16"><circle cx="8" cy="8" r="6.3" fill="#00E000" stroke="#008000" stroke-width="1"/><path d="M6 8 H10 M8 6 V10" fill="none" stroke="#fff" stroke-width="1.3" /><path d="M3.5 11.5 Q8 16 12.5 11.5" fill="none" stroke="#006000" stroke-width="1.4" /></svg>
<svg class="i" style="left:1259px;top:343px" viewBox="0 0 16 16"><path d="M5 3 Q8 0.5 11 3 M5 3 Q4 5 11 5.5 M5 6 Q4 8 11 8.5 M5 9 Q4 11 11 11.5 M5 12 Q4 14 11 14.5 M11 3 Q12 5 5 6 M11 6 Q12 8 5 9 M11 9 Q12 11 5 12" fill="none" stroke="#000080" stroke-width="1" /></svg>
<svg class="i" style="left:1259px;top:366px" viewBox="0 0 16 16"><path d="M12 3 Q4 0 2.5 5 Q2 8.5 13.5 8 M13.5 5.5 Q14 2 8 3 Q2 5 4 8 M4 8 Q6 12 12.5 10.5 M5 10.5 Q7 14 11.5 13 M7 13.5 Q8 16 10 15" fill="none" stroke="#000080" stroke-width="1" /></svg>
<svg class="i" style="left:1259px;top:393px" viewBox="0 0 16 16"><rect x="1.5" y="1.5" width="13" height="13" fill="#000080" /><circle cx="8" cy="8" r="5" fill="#fff" stroke="none" stroke-width="1"/></svg>
<svg class="i" style="left:1259px;top:416px" viewBox="0 0 16 16"><rect x="0.5" y="2.5" width="15" height="11" fill="#000080" /><circle cx="8" cy="8" r="4.2" fill="#fff" stroke="none" stroke-width="1"/></svg>
<svg class="i" style="left:1259px;top:443px" viewBox="0 0 16 16"><path d="M1 8 H12 V12.5 H4 V3 H14.5 V6 M4 12.5 V15 H14.5 V9.5 M7 5.5 H9.5 V10 H7 Z" fill="none" stroke="#000080" stroke-width="1.3" /></svg>
<svg class="i" style="left:1259px;top:466px" viewBox="0 0 16 16"><path d="M1 8 H15 M8 8 Q10.5 8 10.5 6 Q10.5 4 8 4 Q4.5 4 4.5 8 Q4.5 12 8.5 12 Q13 12 13 7.5 Q13 2 8 1.5 Q3 1.5 2 6" fill="none" stroke="#000080" stroke-width="1.1" /><path d="M2 10 Q4 15 9 14.5" fill="none" stroke="#000080" stroke-width="1.1" /></svg>
<svg class="i" style="left:1259px;top:489px" viewBox="0 0 16 16"><path d="M8 8 Q10 8 10 6.5 Q10 5 8 5 Q5 5 5 8 Q5 11 8.5 11 Q12.5 11 12.5 7.5 Q12.5 2.5 8 2.5 Q2.5 2.5 2.5 8 Q2.5 13.5 8.5 13.5 Q13 13.5 14.5 10" fill="none" stroke="#000080" stroke-width="1.1" /></svg>
<svg class="i" style="left:1259px;top:516px" viewBox="0 0 16 16"><rect x="3" y="3" width="10" height="10" fill="#fff" stroke="#000080" stroke-width="1.5"/><path d="M6 1 V15 M10 1 V15 M8 4 V12" fill="none" stroke="#000080" stroke-width="1.6" /><path d="M4.5 1.5 H11.5 M4.5 14.5 H11.5" fill="none" stroke="#000080" stroke-width="1.6" /></svg>
<svg class="i" style="left:1259px;top:539px" viewBox="0 0 16 16"><rect x="0.5" y="5" width="15" height="9" fill="#00FFFF" /><path d="M0.5 3 H15.5" fill="none" stroke="#008000" stroke-width="1.4" /><path d="M0.5 4.5 H15.5 M0.5 14.5 H15.5" fill="none" stroke="#000080" stroke-width="1.6" /><path d="M5 14 Q5 6.5 3.5 5 H12.5 Q11 6.5 11 14 Z" fill="#0000C0" stroke="none" stroke-width="1" /></svg>
<svg class="i" style="left:1259px;top:562px" viewBox="0 0 16 16"><g transform="translate(1,1)"><path d="M1 10 H15 V14.5 H1 Z M1 9 L7 4 H11.5 V5.2 H7.5 L3 9 Z" fill="#FFFFFF" stroke="none" stroke-width="1" /></g><path d="M1 10 H15 V14.5 H1 Z M1 9 L7 4 H11.5 V5.2 H7.5 L3 9 Z" fill="#ACA899" stroke="none" stroke-width="1" /></svg>
<svg class="i" style="left:1259px;top:583px" viewBox="0 0 16 16"><rect x="0.5" y="3.5" width="15" height="10" fill="#FFFF40" /><path d="M0.5 3 H15.5 M0.5 14 H15.5" fill="none" stroke="#000080" stroke-width="1.6" /><circle cx="8" cy="8" r="4.6" fill="#0000E0" stroke="none" stroke-width="1"/><rect x="3.5" y="11" width="9" height="3" fill="#0000E0" /></svg>
<div style="left:1258px;top:188px;width:18px;height:2px;background:#ACA899;border-bottom:1px solid #fff"></div>
<div style="left:1258px;top:260px;width:18px;height:2px;background:#ACA899;border-bottom:1px solid #fff"></div>
<div style="left:1258px;top:311px;width:18px;height:2px;background:#ACA899;border-bottom:1px solid #fff"></div>
<div style="left:1258px;top:338px;width:18px;height:2px;background:#ACA899;border-bottom:1px solid #fff"></div>
<div style="left:1258px;top:387px;width:18px;height:2px;background:#ACA899;border-bottom:1px solid #fff"></div>
<div style="left:1258px;top:438px;width:18px;height:2px;background:#ACA899;border-bottom:1px solid #fff"></div>
<div style="left:1258px;top:511px;width:18px;height:2px;background:#ACA899;border-bottom:1px solid #fff"></div>
<div style="left:1258px;top:604px;width:18px;height:2px;background:#ACA899;border-bottom:1px solid #fff"></div>
<div style="left:4px;top:839px;width:1247px;height:85px;border:1px solid #fff;border-top-color:#ACA899;border-left-color:#ACA899"></div>
<div style="left:5px;top:840px;width:1245px;height:83px;background:#fff;border-top:1px solid #716F64;border-left:1px solid #716F64"></div>
<div style="left:6px;top:841px;width:1244px;height:16px;background:#ECE9D8;border-bottom:1px solid #716F64"></div>
<div style="left:6px;top:857px;width:1244px;height:1px;background:#716F64"></div>
<div class="th" style="left:6px;width:33px"><span class="c">Port</span></div>
<div class="th" style="left:39px;width:55px"><span class="c">Mag(Src)</span></div>
<div class="th" style="left:94px;width:53px"><span class="c">Ang(Src)</span></div>
<div class="th" style="left:147px;width:54px"><span class="c">Mag(Inc)</span></div>
<div class="th" style="left:201px;width:53px"><span class="c">Ang(Inc)</span></div>
<div class="th" style="left:254px;width:55px"><span class="c">Mag(Ref)</span></div>
<div class="th" style="left:309px;width:55px"><span class="c">Ang(Ref)</span></div>
<div class="th" style="left:364px;width:46px"><span class="c">Mag(V)</span></div>
<div class="th" style="left:410px;width:44px"><span class="c">Ang(V)</span></div>
<div class="th" style="left:454px;width:57px"><span class="c">Mag(I)</span></div>
<div class="th" style="left:511px;width:39px"><span class="c">Ang(I)</span></div>
<div class="th" style="left:550px;width:44px"><span class="c">Re(Zs)</span></div>
<div class="th" style="left:594px;width:42px"><span class="c">Im(Zs)</span></div>
<div class="th" style="left:636px;width:25px"><span class="c">Zc</span></div>
<div class="th" style="left:661px;width:33px"><span class="c">Pinc</span></div>
<div class="th" style="left:694px;width:56px"><span class="c">Pref</span></div>
<div class="th" style="left:750px;width:70px"><span class="c">Pin</span></div>
<div class="th" style="left:820px;width:67px"><span class="c">Re(Zactive)</span></div>
<div class="th" style="left:887px;width:65px"><span class="c">Im(Zactive)</span></div>
<div class="td" style="left:6px;top:859px;width:33px;text-align:left;padding-left:5px;"><span class="c">1</span></div>
<div class="td" style="left:39px;top:859px;width:55px;"><span class="c">1</span></div>
<div class="td" style="left:94px;top:859px;width:53px;"><span class="c">0.000</span></div>
<div class="td" style="left:147px;top:859px;width:54px;"><span class="c">1</span></div>
<div class="td" style="left:201px;top:859px;width:53px;"><span class="c">0.000</span></div>
<div class="td" style="left:254px;top:859px;width:55px;"><span class="c">0.6068</span></div>
<div class="td" style="left:309px;top:859px;width:55px;"><span class="c">-0.062</span></div>
<div class="td" style="left:364px;top:859px;width:46px;"><span class="c">1.607</span></div>
<div class="td" style="left:410px;top:859px;width:44px;"><span class="c">-0.023</span></div>
<div class="td" style="left:454px;top:859px;width:57px;"><span class="c">0.007864</span></div>
<div class="td" style="left:511px;top:859px;width:39px;"><span class="c">0.096</span></div>
<div class="td" style="left:550px;top:859px;width:44px;"><span class="c">50</span></div>
<div class="td" style="left:594px;top:859px;width:42px;"><span class="c">0</span></div>
<div class="td" style="left:636px;top:859px;width:25px;"><span class="c">50</span></div>
<div class="td" style="left:661px;top:859px;width:33px;"><span class="c">0.01</span></div>
<div class="td" style="left:694px;top:859px;width:56px;"><span class="c">0.003682</span></div>
<div class="td" style="left:750px;top:859px;width:70px;"><span class="c">-1.312e-005</span></div>
<div class="td" style="left:820px;top:859px;width:67px;"><span class="c">204.3</span></div>
<div class="td" style="left:887px;top:859px;width:65px;"><span class="c">-0.4241</span></div>
<div class="td" style="left:6px;top:873px;width:33px;text-align:left;padding-left:5px;"><span class="c">Sum</span></div>
<div class="td" style="left:661px;top:873px;width:33px;"><span class="c">0.01</span></div>
<div class="td" style="left:694px;top:873px;width:56px;"><span class="c">0.003682</span></div>
<div class="td" style="left:750px;top:873px;width:70px;"><span class="c">-1.312e-005</span></div>
<div style="left:6px;top:873px;width:1244px;height:1px;background:#ECE9D8"></div>
<div style="left:6px;top:887px;width:1244px;height:1px;background:#ECE9D8"></div>
<div style="left:6px;top:901px;width:1244px;height:1px;background:#ECE9D8"></div>
<div style="left:6px;top:915px;width:1244px;height:1px;background:#ECE9D8"></div>
<div style="left:38px;top:858px;width:1px;height:65px;background:#ECE9D8"></div>
<div style="left:93px;top:858px;width:1px;height:65px;background:#ECE9D8"></div>
<div style="left:146px;top:858px;width:1px;height:65px;background:#ECE9D8"></div>
<div style="left:200px;top:858px;width:1px;height:65px;background:#ECE9D8"></div>
<div style="left:253px;top:858px;width:1px;height:65px;background:#ECE9D8"></div>
<div style="left:308px;top:858px;width:1px;height:65px;background:#ECE9D8"></div>
<div style="left:363px;top:858px;width:1px;height:65px;background:#ECE9D8"></div>
<div style="left:409px;top:858px;width:1px;height:65px;background:#ECE9D8"></div>
<div style="left:453px;top:858px;width:1px;height:65px;background:#ECE9D8"></div>
<div style="left:510px;top:858px;width:1px;height:65px;background:#ECE9D8"></div>
<div style="left:549px;top:858px;width:1px;height:65px;background:#ECE9D8"></div>
<div style="left:593px;top:858px;width:1px;height:65px;background:#ECE9D8"></div>
<div style="left:635px;top:858px;width:1px;height:65px;background:#ECE9D8"></div>
<div style="left:660px;top:858px;width:1px;height:65px;background:#ECE9D8"></div>
<div style="left:693px;top:858px;width:1px;height:65px;background:#ECE9D8"></div>
<div style="left:749px;top:858px;width:1px;height:65px;background:#ECE9D8"></div>
<div style="left:819px;top:858px;width:1px;height:65px;background:#ECE9D8"></div>
<div style="left:886px;top:858px;width:1px;height:65px;background:#ECE9D8"></div>
<div style="left:951px;top:858px;width:1px;height:65px;background:#ECE9D8"></div>
<div class="hs" style="top:928px;background:#ACA899;left:0px;width:1256px"></div>
<div class="hs" style="top:929px;background:#FFFFFF;left:0px;width:1256px"></div>
<div class="hs" style="top:946px;background:#ACA899;left:1256px;width:23px"></div>
<div class="hs" style="top:947px;background:#FFFFFF;left:1256px;width:23px"></div>
<div class="sp" style="left:107px;top:933px;width:206px;padding-left:1px;line-height:13px">Angles : (-86.3484, 5.36728, 83.9473)</div>
<div class="sp" style="left:314px;top:933px;width:166px;padding-left:1px;line-height:13px">Scale : (100%, 100%, 100%)</div>
<div class="sp" style="left:482px;top:933px;width:57px;padding-left:1px;line-height:13px">150%</div>
<span class="t" style="left:1px;top:951px;line-height:14px">For Help, press F1</span>
<div class="sp" style="left:697px;width:36px"><span class="c" style="transform:scaleX(0.95);transform-origin:0 0">mm</span></div>
<div class="sp" style="left:735px;width:60px"><span class="c" style="transform:scaleX(0.95);transform-origin:0 0">1.51426%</span></div>
<div class="sp" style="left:797px;width:76px"><span class="c" style="transform:scaleX(0.95);transform-origin:0 0">R2_COPYPEN</span></div>
<div class="sp" style="left:875px;width:126px"><span class="c" style="transform:scaleX(0.95);transform-origin:0 0">No Plane Wave Defined</span></div>
<div class="sp" style="left:1003px;width:256px"><span class="c" style="transform:scaleX(0.95);transform-origin:0 0"></span></div>
<svg style="left:1264px;top:951px" width="15" height="15" viewBox="0 0 15 15"><path d="M14 3 L3 14 M14 7 L7 14 M14 11 L11 14" stroke="#ACA899" stroke-width="1.6"/><path d="M14 4.5 L4.5 14 M14 8.5 L8.5 14 M14 12.5 L12.5 14" stroke="#fff" stroke-width="0.8"/></svg>
</body></html>
